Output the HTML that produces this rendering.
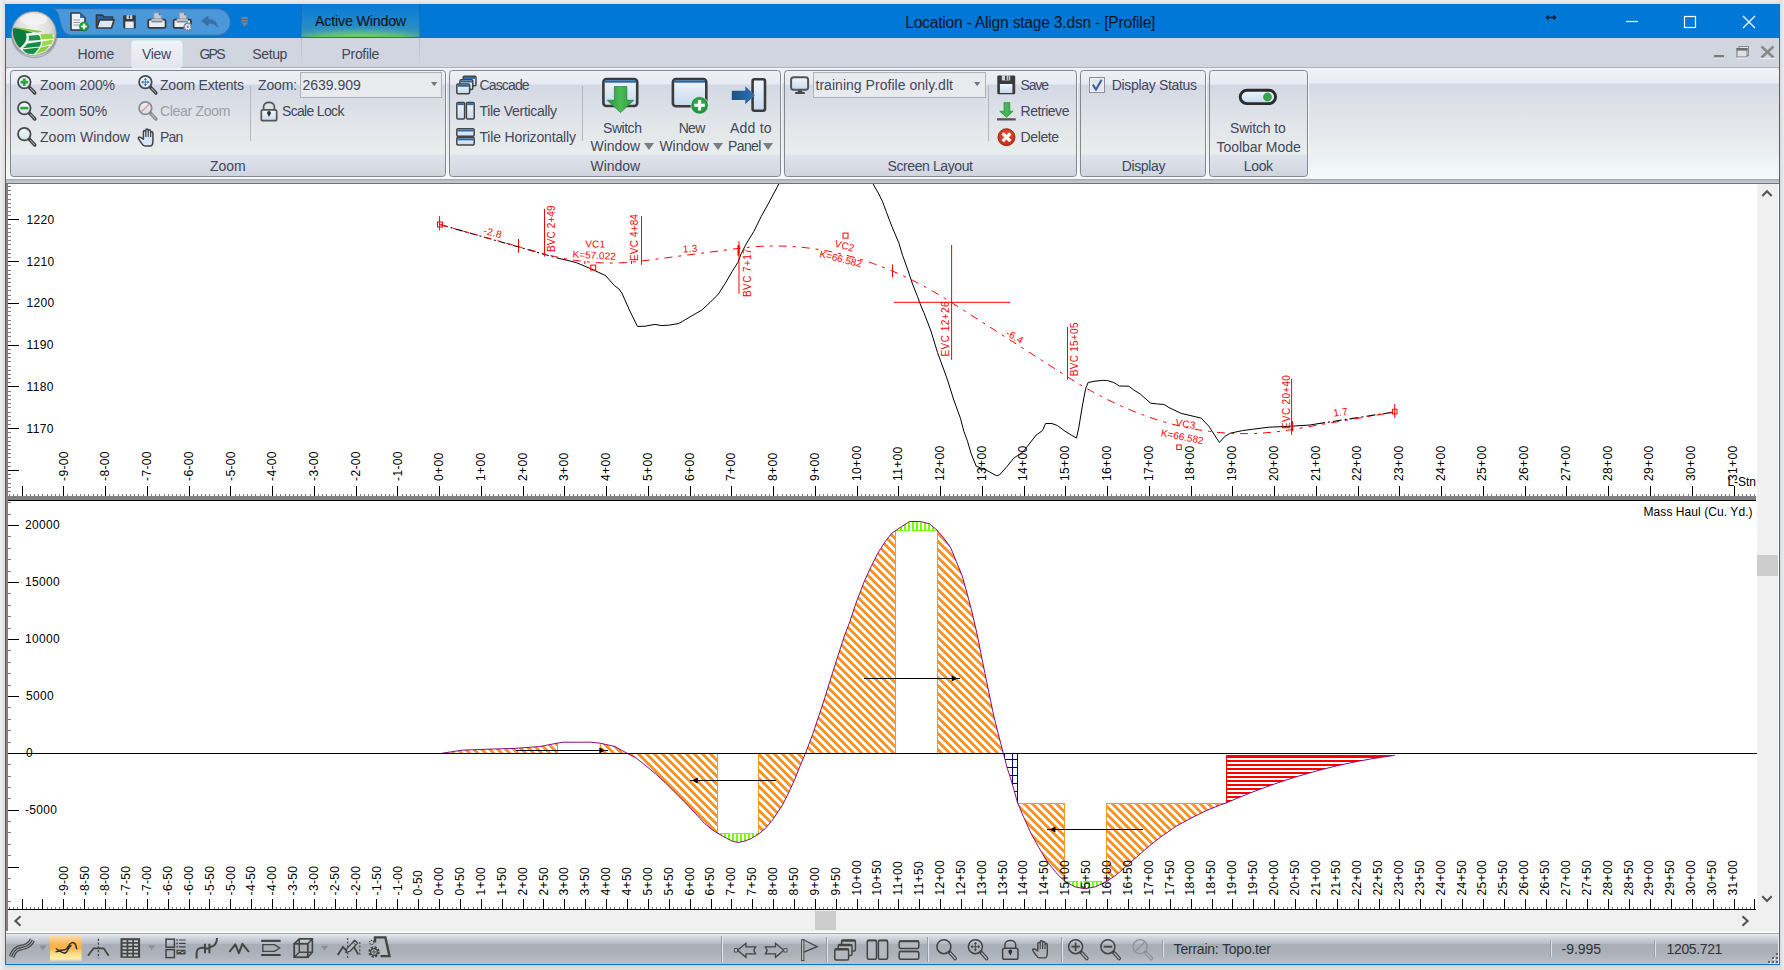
<!DOCTYPE html>
<html><head><meta charset="utf-8"><title>Location</title>
<style>
html,body{margin:0;padding:0}
body{width:1784px;height:970px;position:relative;overflow:hidden;background:#e6e5e5;font-family:"Liberation Sans",sans-serif}
.t{position:absolute;white-space:nowrap;line-height:20px;height:20px}
svg{position:absolute;overflow:visible}
svg text{font-family:"Liberation Sans",sans-serif}
</style></head><body>
<div style="position:absolute;left:0px;top:0px;width:1784px;height:4px;background:linear-gradient(#f0eeee,#dcdada)"></div>
<div style="position:absolute;left:0px;top:965px;width:1784px;height:5px;background:linear-gradient(#d6d2cf,#e4e3e2)"></div>
<div style="position:absolute;left:0px;top:0px;width:5px;height:970px;background:linear-gradient(90deg,#efefef,#dedede)"></div>
<div style="position:absolute;left:1780px;top:0px;width:4px;height:970px;background:linear-gradient(90deg,#dadada,#ececec)"></div>
<div style="position:absolute;left:5px;top:4px;width:1775px;height:961px;background:#0078d7"></div>
<div style="position:absolute;left:6px;top:38px;width:1773px;height:36px;background:#d1d5df"></div>
<div style="position:absolute;left:301px;top:4px;width:119px;height:33px;background:radial-gradient(ellipse 80% 34% at 50% 100%,rgba(118,208,124,1) 0%,rgba(100,196,130,0.75) 40%,rgba(70,170,160,0.25) 75%,rgba(60,160,180,0) 100%),linear-gradient(#0a7ad5 0%,#1482d2 30%,#2389c8 60%,#2f90bf 85%,#3a98b8 100%)"></div>
<div style="position:absolute;left:302px;top:36px;width:117px;height:1px;background:linear-gradient(90deg,#3f9fa0,#66c850 15%,#66c850 85%,#3f9fa0)"></div>
<div style="position:absolute;left:301px;top:4px;width:1px;height:33px;background:rgba(20,60,110,0.25)"></div>
<div style="position:absolute;left:419px;top:4px;width:1px;height:33px;background:rgba(20,60,110,0.25)"></div>
<div style="position:absolute;left:301px;top:38px;width:1px;height:29px;background:linear-gradient(#b8bcc9,#d1d5df)"></div>
<div style="position:absolute;left:419px;top:38px;width:1px;height:29px;background:linear-gradient(#b8bcc9,#d1d5df)"></div>
<div class="t " style="left:315.00px;top:11.20px;font-size:14.3px;letter-spacing:-0.213px;color:#0a0f18;">Active Window</div>
<div class="t " style="left:905.20px;top:12.64px;font-size:15.6px;letter-spacing:-0.207px;color:#0b1622;">Location - Align stage 3.dsn - [Profile]</div>
<svg style="left:1620px;top:10px" width="150" height="24" viewBox="1620 10 150 24"><g stroke="#fff" stroke-width="1.2" fill="none"><path d="M1626 21.5H1638"/><rect x="1684.5" y="16.5" width="11" height="11"/><path d="M1743 16L1755 28M1755 16L1743 28"/></g></svg>
<svg style="left:1545px;top:13px" width="12" height="10" viewBox="0 0 12 10"><path d="M0.5 4.5L3.5 1.5V3.7H8.5V1.5L11.5 4.5L8.5 7.5V5.3H3.5V7.5Z" fill="#1a1a1a"/></svg>
<svg style="left:1710px;top:44px" width="68" height="18" viewBox="1710 44 68 18"><rect x="1714" y="55" width="10" height="2.6" fill="#7b7b7b"/><rect x="1714" y="57.6" width="10" height="1" fill="#eee"/><rect x="1739" y="46.5" width="9.5" height="9" fill="#e3e6ee" stroke="#8a8a8a" stroke-width="1"/><rect x="1737" y="48.5" width="10" height="8.5" fill="#dde1ea" stroke="#777" stroke-width="1"/><rect x="1736.5" y="48" width="11" height="2.6" fill="#6e6e6e"/><rect x="1737" y="57.6" width="11" height="1" fill="#f4f4f4"/><path d="M1761.5 46.5L1773.5 57.5M1773.5 46.5L1761.5 57.5" stroke="#8a8a8a" stroke-width="2.6"/><rect x="1760" y="58" width="15" height="1" fill="#eee"/></svg>
<div class="t " style="left:77.50px;top:43.90px;font-size:14px;letter-spacing:-0.211px;color:#43475a;">Home</div>
<div style="position:absolute;left:131px;top:39.5px;width:51.5px;height:28.5px;background:linear-gradient(#f1f3f9,#e2e5ee);border:1px solid #c9eef4;border-bottom:none;border-radius:4px 4px 0 0;box-sizing:border-box"></div>
<div class="t " style="left:141.90px;top:43.90px;font-size:14px;letter-spacing:-0.273px;color:#43475a;">View</div>
<div class="t " style="left:199.40px;top:43.90px;font-size:14px;letter-spacing:-1.739px;color:#43475a;">GPS</div>
<div class="t " style="left:252.25px;top:43.90px;font-size:14px;letter-spacing:-0.367px;color:#43475a;">Setup</div>
<div class="t " style="left:341.50px;top:43.90px;font-size:14px;letter-spacing:-0.312px;color:#43475a;">Profile</div>
<div style="position:absolute;left:6px;top:67px;width:1773px;height:1px;background:#aeb2ba"></div>
<div style="position:absolute;left:6px;top:68px;width:1772.5px;height:110px;border-radius:4px 4px 0 0;background:linear-gradient(#f0f2f8 0px,#e9ecf4 15px,#d5d9e6 16px,#dadee7 30px,#e1e4e9 50px,#e7eaea 70px,#ecf2f1 90px,#f3fbfa 110px)"></div>
<div style="position:absolute;left:132px;top:67px;width:49px;height:1px;background:#e2e5ee"></div>
<div style="position:absolute;left:6px;top:178px;width:1773px;height:1px;background:#f4f9f9"></div>
<div style="position:absolute;left:6px;top:179px;width:1773px;height:5px;background:linear-gradient(#989ca4 0px,#b2b7c0 1px,#bdc2ca 2px,#c4c8cf 3.5px,#c4c8cf 4px,#727272 4px,#727272 5px)"></div>
<div style="position:absolute;left:10px;top:70px;width:436px;height:107px;box-sizing:border-box;border:1px solid #85888f;border-radius:3.5px;background:linear-gradient(#eef0f7 0px,#e8ebf3 13px,#d3d8e5 14px,#dbdfe7 35px,#e3e6ea 55px,#e8ebeb 75px,#eaeeed 83px,#e0e4ed 84px,#cfd3dc 107px);box-shadow:1px 1px 0 #f6f8fa"></div>
<div class="t " style="left:210.00px;top:156.20px;font-size:14px;letter-spacing:-0.008px;color:#43475a;">Zoom</div>
<div style="position:absolute;left:449px;top:70px;width:332px;height:107px;box-sizing:border-box;border:1px solid #85888f;border-radius:3.5px;background:linear-gradient(#eef0f7 0px,#e8ebf3 13px,#d3d8e5 14px,#dbdfe7 35px,#e3e6ea 55px,#e8ebeb 75px,#eaeeed 83px,#e0e4ed 84px,#cfd3dc 107px);box-shadow:1px 1px 0 #f6f8fa"></div>
<div class="t " style="left:590.50px;top:156.20px;font-size:14px;letter-spacing:-0.049px;color:#43475a;">Window</div>
<div style="position:absolute;left:784px;top:70px;width:293px;height:107px;box-sizing:border-box;border:1px solid #85888f;border-radius:3.5px;background:linear-gradient(#eef0f7 0px,#e8ebf3 13px,#d3d8e5 14px,#dbdfe7 35px,#e3e6ea 55px,#e8ebeb 75px,#eaeeed 83px,#e0e4ed 84px,#cfd3dc 107px);box-shadow:1px 1px 0 #f6f8fa"></div>
<div class="t " style="left:887.50px;top:156.20px;font-size:14px;letter-spacing:-0.406px;color:#43475a;">Screen Layout</div>
<div style="position:absolute;left:1080px;top:70px;width:126px;height:107px;box-sizing:border-box;border:1px solid #85888f;border-radius:3.5px;background:linear-gradient(#eef0f7 0px,#e8ebf3 13px,#d3d8e5 14px,#dbdfe7 35px,#e3e6ea 55px,#e8ebeb 75px,#eaeeed 83px,#e0e4ed 84px,#cfd3dc 107px);box-shadow:1px 1px 0 #f6f8fa"></div>
<div class="t " style="left:1121.75px;top:156.20px;font-size:14px;letter-spacing:-0.379px;color:#43475a;">Display</div>
<div style="position:absolute;left:1209px;top:70px;width:99px;height:107px;box-sizing:border-box;border:1px solid #85888f;border-radius:3.5px;background:linear-gradient(#eef0f7 0px,#e8ebf3 13px,#d3d8e5 14px,#dbdfe7 35px,#e3e6ea 55px,#e8ebeb 75px,#eaeeed 83px,#e0e4ed 84px,#cfd3dc 107px);box-shadow:1px 1px 0 #f6f8fa"></div>
<div class="t " style="left:1243.75px;top:156.20px;font-size:14px;letter-spacing:-0.339px;color:#43475a;">Look</div>
<div class="t " style="left:40.00px;top:74.70px;font-size:14px;letter-spacing:-0.053px;color:#43475a;">Zoom 200%</div>
<div class="t " style="left:40.00px;top:100.70px;font-size:14px;letter-spacing:-0.087px;color:#43475a;">Zoom 50%</div>
<div class="t " style="left:40.00px;top:126.70px;font-size:14px;letter-spacing:0.049px;color:#43475a;">Zoom Window</div>
<div class="t " style="left:160.00px;top:74.70px;font-size:14px;letter-spacing:-0.218px;color:#43475a;">Zoom Extents</div>
<div class="t " style="left:160.00px;top:100.70px;font-size:14px;letter-spacing:-0.313px;color:#9c9ea8;">Clear Zoom</div>
<div class="t " style="left:160.00px;top:126.70px;font-size:14px;letter-spacing:-0.803px;color:#43475a;">Pan</div>
<div style="position:absolute;left:250px;top:86px;width:1px;height:55px;background:#b4b8c0"></div>
<div class="t " style="left:258.00px;top:74.70px;font-size:14px;letter-spacing:-0.134px;color:#43475a;">Zoom:</div>
<div style="position:absolute;left:300px;top:72px;width:142px;height:26px;background:#e8eaee;border:1px solid #aeb2ba;box-sizing:border-box"></div>
<div class="t " style="left:302.50px;top:74.70px;font-size:14px;letter-spacing:-0.017px;color:#43475a;">2639.909</div>
<svg style="left:430.500px;top:82px" width="7" height="5"><path d="M0 0H6.400L3.200 4.200Z" fill="#74777f"/></svg>
<div class="t " style="left:282.00px;top:100.70px;font-size:14px;letter-spacing:-0.673px;color:#43475a;">Scale Lock</div>
<div class="t " style="left:479.50px;top:74.70px;font-size:14px;letter-spacing:-0.857px;color:#43475a;">Cascade</div>
<div class="t " style="left:479.50px;top:100.70px;font-size:14px;letter-spacing:-0.313px;color:#43475a;">Tile Vertically</div>
<div class="t " style="left:479.50px;top:126.70px;font-size:14px;letter-spacing:-0.165px;color:#43475a;">Tile Horizontally</div>
<div style="position:absolute;left:582px;top:86px;width:1px;height:55px;background:#b4b8c0"></div>
<div class="t " style="left:603.00px;top:117.70px;font-size:14px;letter-spacing:-0.456px;color:#43475a;">Switch</div>
<div class="t " style="left:590.50px;top:136.30px;font-size:14px;letter-spacing:-0.049px;color:#43475a;">Window</div>
<div class="t " style="left:678.75px;top:117.70px;font-size:14px;letter-spacing:-0.752px;color:#43475a;">New</div>
<div class="t " style="left:659.50px;top:136.30px;font-size:14px;letter-spacing:-0.090px;color:#43475a;">Window</div>
<div class="t " style="left:730.00px;top:117.70px;font-size:14px;letter-spacing:0.213px;color:#43475a;">Add to</div>
<div class="t " style="left:728.00px;top:136.30px;font-size:14px;letter-spacing:-0.611px;color:#43475a;">Panel</div>
<svg style="left:643.75px;top:143px" width="10" height="7"><path d="M0 0H10L5 7Z" fill="#7a7d86"/></svg>
<svg style="left:712.5px;top:143px" width="10" height="7"><path d="M0 0H10L5 7Z" fill="#7a7d86"/></svg>
<svg style="left:763px;top:143px" width="10" height="7"><path d="M0 0H10L5 7Z" fill="#7a7d86"/></svg>
<div style="position:absolute;left:813px;top:72px;width:173px;height:26px;background:#e8eaee;border:1px solid #aeb2ba;box-sizing:border-box"></div>
<div class="t " style="left:815.50px;top:74.70px;font-size:14px;letter-spacing:0.032px;color:#43475a;">training Profile only.dlt</div>
<svg style="left:974.300px;top:82px" width="7" height="5"><path d="M0 0H6.400L3.200 4.200Z" fill="#74777f"/></svg>
<div style="position:absolute;left:988px;top:86px;width:1px;height:55px;background:#b4b8c0"></div>
<div class="t " style="left:1020.50px;top:74.70px;font-size:14px;letter-spacing:-1.102px;color:#43475a;">Save</div>
<div class="t " style="left:1020.50px;top:100.70px;font-size:14px;letter-spacing:-0.454px;color:#43475a;">Retrieve</div>
<div class="t " style="left:1020.50px;top:126.70px;font-size:14px;letter-spacing:-0.369px;color:#43475a;">Delete</div>
<div class="t " style="left:1111.75px;top:74.70px;font-size:14px;letter-spacing:-0.320px;color:#43475a;">Display Status</div>
<div class="t " style="left:1230.00px;top:118.20px;font-size:14px;letter-spacing:-0.133px;color:#43475a;">Switch to</div>
<div class="t " style="left:1216.50px;top:136.70px;font-size:14px;letter-spacing:-0.060px;color:#43475a;">Toolbar Mode</div>
<div style="position:absolute;left:6px;top:184px;width:2px;height:747px;background:#808080"></div>
<div style="position:absolute;left:8px;top:184px;width:1749px;height:726px;background:#fff"></div>
<div style="position:absolute;left:1757px;top:184px;width:21px;height:726px;background:#f0f0f0"></div>
<div style="position:absolute;left:1778px;top:184px;width:1px;height:750px;background:#fff"></div>
<div style="position:absolute;left:1757px;top:555px;width:21px;height:21px;background:#cdcdcd"></div>
<svg style="left:1761px;top:189px" width="12" height="8"><path d="M1.300 7L6 2.200L10.700 7" stroke="#555" stroke-width="2.100" fill="none"/></svg>
<svg style="left:1761px;top:895px" width="12" height="8"><path d="M1.300 1.200L6 6L10.700 1.200" stroke="#555" stroke-width="2.100" fill="none"/></svg>
<div style="position:absolute;left:8px;top:910px;width:1770px;height:21px;background:#f0f0f0"></div>
<div style="position:absolute;left:815px;top:911px;width:21px;height:19px;background:#cdcdcd"></div>
<svg style="left:13px;top:915px" width="9" height="12"><path d="M7.500 1.300L2.400 6L7.500 10.700" stroke="#555" stroke-width="2.100" fill="none"/></svg>
<svg style="left:1741px;top:915px" width="9" height="12"><path d="M1.500 1.300L6.600 6L1.500 10.700" stroke="#555" stroke-width="2.100" fill="none"/></svg>
<div style="position:absolute;left:6px;top:931px;width:1773px;height:2px;background:linear-gradient(#f6f6f6,#ffffff)"></div>
<div style="position:absolute;left:6px;top:933px;width:1773px;height:1px;background:#a4a8b1"></div>
<div style="position:absolute;left:6px;top:934px;width:1773px;height:30px;background:linear-gradient(#e9ebf0 0px,#d6d9e0 3px,#b5bac6 10px,#a9aeb6 10.5px,#adb1b9 20px,#bcbfc7 30px)"></div>
<div class="t " style="left:1173.60px;top:939.30px;font-size:14px;letter-spacing:-0.217px;color:#2f333c;">Terrain: Topo.ter</div>
<div class="t " style="left:1561.60px;top:938.70px;font-size:14px;letter-spacing:-0.049px;color:#2f333c;">-9.995</div>
<div class="t " style="left:1666.60px;top:938.70px;font-size:14px;letter-spacing:-0.373px;color:#2f333c;">1205.721</div>
<div style="position:absolute;left:722px;top:936px;width:1px;height:26px;background:#dfe2e7"></div>
<div style="position:absolute;left:721px;top:936px;width:1px;height:26px;background:#989ca4"></div>
<div style="position:absolute;left:827px;top:937px;width:1px;height:25px;background:#dfe2e7"></div>
<div style="position:absolute;left:826px;top:937px;width:1px;height:25px;background:#989ca4"></div>
<div style="position:absolute;left:927.5px;top:937px;width:1px;height:25px;background:#dfe2e7"></div>
<div style="position:absolute;left:926.5px;top:937px;width:1px;height:25px;background:#989ca4"></div>
<div style="position:absolute;left:1061.5px;top:937px;width:1px;height:25px;background:#dfe2e7"></div>
<div style="position:absolute;left:1060.5px;top:937px;width:1px;height:25px;background:#989ca4"></div>
<div style="position:absolute;left:1163px;top:940px;width:1px;height:17px;background:#dfe2e7"></div>
<div style="position:absolute;left:1162px;top:940px;width:1px;height:17px;background:#989ca4"></div>
<div style="position:absolute;left:1551px;top:940px;width:1px;height:17px;background:#dfe2e7"></div>
<div style="position:absolute;left:1550px;top:940px;width:1px;height:17px;background:#989ca4"></div>
<div style="position:absolute;left:1655px;top:940px;width:1px;height:17px;background:#dfe2e7"></div>
<div style="position:absolute;left:1654px;top:940px;width:1px;height:17px;background:#989ca4"></div>
<div style="position:absolute;left:1778px;top:934px;width:1px;height:30px;background:#efe9e9"></div>
<svg style="left:0;top:0" width="1784" height="970" viewBox="0 0 1784 970">
<defs>
<clipPath id="cu"><rect x="8" y="184" width="1749" height="312"/></clipPath>
<clipPath id="cl"><rect x="8" y="501" width="1749" height="409"/></clipPath>
<pattern id="ho" width="8" height="8" patternUnits="userSpaceOnUse"><rect width="8" height="8" fill="#fff"/><g fill="#ff9428" shape-rendering="crispEdges"><rect x="3" y="0" width="4" height="1"/><rect x="4" y="1" width="4" height="1"/><rect x="5" y="2" width="3" height="1"/><rect x="0" y="2" width="1" height="1"/><rect x="6" y="3" width="2" height="1"/><rect x="0" y="3" width="2" height="1"/><rect x="7" y="4" width="1" height="1"/><rect x="0" y="4" width="3" height="1"/><rect x="0" y="5" width="4" height="1"/><rect x="1" y="6" width="4" height="1"/><rect x="2" y="7" width="4" height="1"/></g></pattern>
<pattern id="hg" width="4" height="4" patternUnits="userSpaceOnUse"><rect width="4" height="4" fill="#fff"/><rect width="2" height="4" fill="#78ff00" shape-rendering="crispEdges"/></pattern>
<pattern id="hr" width="4" height="4" patternUnits="userSpaceOnUse"><rect width="4" height="4" fill="#fff"/><rect width="4" height="2" fill="#ff0000" shape-rendering="crispEdges"/></pattern>
<pattern id="hb" width="8" height="8" patternUnits="userSpaceOnUse"><rect width="8" height="8" fill="#fff"/><g fill="#00008b" shape-rendering="crispEdges"><rect x="4" y="0" width="1" height="8"/><rect x="0" y="7" width="8" height="1"/></g></pattern>
</defs>
<g shape-rendering="crispEdges" fill="#000">
<rect x="8" y="186" width="3" height="1" fill="#7c7c7c"/>
<rect x="8" y="190" width="3" height="1" fill="#7c7c7c"/>
<rect x="8" y="194" width="3" height="1" fill="#7c7c7c"/>
<rect x="8" y="199" width="3" height="1" fill="#7c7c7c"/>
<rect x="8" y="203" width="3" height="1" fill="#7c7c7c"/>
<rect x="8" y="207" width="3" height="1" fill="#7c7c7c"/>
<rect x="8" y="211" width="3" height="1" fill="#7c7c7c"/>
<rect x="8" y="215" width="3" height="1" fill="#7c7c7c"/>
<rect x="8" y="219" width="11" height="1"/>
<rect x="8" y="224" width="3" height="1" fill="#7c7c7c"/>
<rect x="8" y="228" width="3" height="1" fill="#7c7c7c"/>
<rect x="8" y="232" width="3" height="1" fill="#7c7c7c"/>
<rect x="8" y="236" width="3" height="1" fill="#7c7c7c"/>
<rect x="8" y="240" width="3" height="1" fill="#7c7c7c"/>
<rect x="8" y="244" width="3" height="1" fill="#7c7c7c"/>
<rect x="8" y="249" width="3" height="1" fill="#7c7c7c"/>
<rect x="8" y="253" width="3" height="1" fill="#7c7c7c"/>
<rect x="8" y="257" width="3" height="1" fill="#7c7c7c"/>
<rect x="8" y="261" width="11" height="1"/>
<rect x="8" y="265" width="3" height="1" fill="#7c7c7c"/>
<rect x="8" y="270" width="3" height="1" fill="#7c7c7c"/>
<rect x="8" y="274" width="3" height="1" fill="#7c7c7c"/>
<rect x="8" y="278" width="3" height="1" fill="#7c7c7c"/>
<rect x="8" y="282" width="3" height="1" fill="#7c7c7c"/>
<rect x="8" y="286" width="3" height="1" fill="#7c7c7c"/>
<rect x="8" y="290" width="3" height="1" fill="#7c7c7c"/>
<rect x="8" y="295" width="3" height="1" fill="#7c7c7c"/>
<rect x="8" y="299" width="3" height="1" fill="#7c7c7c"/>
<rect x="8" y="303" width="11" height="1"/>
<rect x="8" y="307" width="3" height="1" fill="#7c7c7c"/>
<rect x="8" y="311" width="3" height="1" fill="#7c7c7c"/>
<rect x="8" y="315" width="3" height="1" fill="#7c7c7c"/>
<rect x="8" y="320" width="3" height="1" fill="#7c7c7c"/>
<rect x="8" y="324" width="3" height="1" fill="#7c7c7c"/>
<rect x="8" y="328" width="3" height="1" fill="#7c7c7c"/>
<rect x="8" y="332" width="3" height="1" fill="#7c7c7c"/>
<rect x="8" y="336" width="3" height="1" fill="#7c7c7c"/>
<rect x="8" y="341" width="3" height="1" fill="#7c7c7c"/>
<rect x="8" y="345" width="11" height="1"/>
<rect x="8" y="349" width="3" height="1" fill="#7c7c7c"/>
<rect x="8" y="353" width="3" height="1" fill="#7c7c7c"/>
<rect x="8" y="357" width="3" height="1" fill="#7c7c7c"/>
<rect x="8" y="361" width="3" height="1" fill="#7c7c7c"/>
<rect x="8" y="366" width="3" height="1" fill="#7c7c7c"/>
<rect x="8" y="370" width="3" height="1" fill="#7c7c7c"/>
<rect x="8" y="374" width="3" height="1" fill="#7c7c7c"/>
<rect x="8" y="378" width="3" height="1" fill="#7c7c7c"/>
<rect x="8" y="382" width="3" height="1" fill="#7c7c7c"/>
<rect x="8" y="386" width="11" height="1"/>
<rect x="8" y="391" width="3" height="1" fill="#7c7c7c"/>
<rect x="8" y="395" width="3" height="1" fill="#7c7c7c"/>
<rect x="8" y="399" width="3" height="1" fill="#7c7c7c"/>
<rect x="8" y="403" width="3" height="1" fill="#7c7c7c"/>
<rect x="8" y="407" width="3" height="1" fill="#7c7c7c"/>
<rect x="8" y="412" width="3" height="1" fill="#7c7c7c"/>
<rect x="8" y="416" width="3" height="1" fill="#7c7c7c"/>
<rect x="8" y="420" width="3" height="1" fill="#7c7c7c"/>
<rect x="8" y="424" width="3" height="1" fill="#7c7c7c"/>
<rect x="8" y="428" width="11" height="1"/>
<rect x="8" y="432" width="3" height="1" fill="#7c7c7c"/>
<rect x="8" y="437" width="3" height="1" fill="#7c7c7c"/>
<rect x="8" y="441" width="3" height="1" fill="#7c7c7c"/>
<rect x="8" y="445" width="3" height="1" fill="#7c7c7c"/>
<rect x="8" y="449" width="3" height="1" fill="#7c7c7c"/>
<rect x="8" y="453" width="3" height="1" fill="#7c7c7c"/>
<rect x="8" y="457" width="3" height="1" fill="#7c7c7c"/>
<rect x="8" y="462" width="3" height="1" fill="#7c7c7c"/>
<rect x="8" y="466" width="3" height="1" fill="#7c7c7c"/>
<rect x="8" y="470" width="11" height="1"/>
<rect x="8" y="474" width="3" height="1" fill="#7c7c7c"/>
<rect x="8" y="478" width="3" height="1" fill="#7c7c7c"/>
<rect x="8" y="483" width="3" height="1" fill="#7c7c7c"/>
<rect x="8" y="487" width="3" height="1" fill="#7c7c7c"/>
<rect x="8" y="491" width="3" height="1" fill="#7c7c7c"/>
<rect x="8" y="901" width="3" height="1" fill="#7c7c7c"/>
<rect x="8" y="889" width="3" height="1" fill="#7c7c7c"/>
<rect x="8" y="878" width="3" height="1" fill="#7c7c7c"/>
<rect x="8" y="867" width="11" height="1"/>
<rect x="8" y="855" width="3" height="1" fill="#7c7c7c"/>
<rect x="8" y="844" width="3" height="1" fill="#7c7c7c"/>
<rect x="8" y="832" width="3" height="1" fill="#7c7c7c"/>
<rect x="8" y="821" width="3" height="1" fill="#7c7c7c"/>
<rect x="8" y="810" width="11" height="1"/>
<rect x="8" y="798" width="3" height="1" fill="#7c7c7c"/>
<rect x="8" y="787" width="3" height="1" fill="#7c7c7c"/>
<rect x="8" y="776" width="3" height="1" fill="#7c7c7c"/>
<rect x="8" y="764" width="3" height="1" fill="#7c7c7c"/>
<rect x="8" y="753" width="11" height="1"/>
<rect x="8" y="742" width="3" height="1" fill="#7c7c7c"/>
<rect x="8" y="730" width="3" height="1" fill="#7c7c7c"/>
<rect x="8" y="719" width="3" height="1" fill="#7c7c7c"/>
<rect x="8" y="707" width="3" height="1" fill="#7c7c7c"/>
<rect x="8" y="696" width="11" height="1"/>
<rect x="8" y="685" width="3" height="1" fill="#7c7c7c"/>
<rect x="8" y="673" width="3" height="1" fill="#7c7c7c"/>
<rect x="8" y="662" width="3" height="1" fill="#7c7c7c"/>
<rect x="8" y="650" width="3" height="1" fill="#7c7c7c"/>
<rect x="8" y="639" width="11" height="1"/>
<rect x="8" y="628" width="3" height="1" fill="#7c7c7c"/>
<rect x="8" y="616" width="3" height="1" fill="#7c7c7c"/>
<rect x="8" y="605" width="3" height="1" fill="#7c7c7c"/>
<rect x="8" y="593" width="3" height="1" fill="#7c7c7c"/>
<rect x="8" y="582" width="11" height="1"/>
<rect x="8" y="571" width="3" height="1" fill="#7c7c7c"/>
<rect x="8" y="559" width="3" height="1" fill="#7c7c7c"/>
<rect x="8" y="548" width="3" height="1" fill="#7c7c7c"/>
<rect x="8" y="536" width="3" height="1" fill="#7c7c7c"/>
<rect x="8" y="525" width="11" height="1"/>
<rect x="8" y="514" width="3" height="1" fill="#7c7c7c"/>
<rect x="8" y="502" width="3" height="1" fill="#7c7c7c"/>
<rect x="9" y="494" width="1" height="2" fill="#808080"/>
<rect x="9" y="907" width="1" height="2" fill="#808080"/>
<rect x="13" y="494" width="1" height="2" fill="#808080"/>
<rect x="13" y="907" width="1" height="2" fill="#808080"/>
<rect x="17" y="494" width="1" height="2" fill="#808080"/>
<rect x="17" y="907" width="1" height="2" fill="#808080"/>
<rect x="22" y="486" width="1" height="10"/>
<rect x="22" y="899" width="1" height="10"/>
<rect x="26" y="494" width="1" height="2" fill="#808080"/>
<rect x="26" y="907" width="1" height="2" fill="#808080"/>
<rect x="30" y="494" width="1" height="2" fill="#808080"/>
<rect x="30" y="907" width="1" height="2" fill="#808080"/>
<rect x="34" y="494" width="1" height="2" fill="#808080"/>
<rect x="34" y="907" width="1" height="2" fill="#808080"/>
<rect x="38" y="494" width="1" height="2" fill="#808080"/>
<rect x="38" y="907" width="1" height="2" fill="#808080"/>
<rect x="42" y="494" width="1" height="2" fill="#808080"/>
<rect x="42" y="899" width="1" height="10"/>
<rect x="47" y="494" width="1" height="2" fill="#808080"/>
<rect x="47" y="907" width="1" height="2" fill="#808080"/>
<rect x="51" y="494" width="1" height="2" fill="#808080"/>
<rect x="51" y="907" width="1" height="2" fill="#808080"/>
<rect x="55" y="494" width="1" height="2" fill="#808080"/>
<rect x="55" y="907" width="1" height="2" fill="#808080"/>
<rect x="59" y="494" width="1" height="2" fill="#808080"/>
<rect x="59" y="907" width="1" height="2" fill="#808080"/>
<rect x="63" y="486" width="1" height="10"/>
<rect x="63" y="899" width="1" height="10"/>
<rect x="67" y="494" width="1" height="2" fill="#808080"/>
<rect x="67" y="907" width="1" height="2" fill="#808080"/>
<rect x="72" y="494" width="1" height="2" fill="#808080"/>
<rect x="72" y="907" width="1" height="2" fill="#808080"/>
<rect x="76" y="494" width="1" height="2" fill="#808080"/>
<rect x="76" y="907" width="1" height="2" fill="#808080"/>
<rect x="80" y="494" width="1" height="2" fill="#808080"/>
<rect x="80" y="907" width="1" height="2" fill="#808080"/>
<rect x="84" y="494" width="1" height="2" fill="#808080"/>
<rect x="84" y="899" width="1" height="10"/>
<rect x="88" y="494" width="1" height="2" fill="#808080"/>
<rect x="88" y="907" width="1" height="2" fill="#808080"/>
<rect x="93" y="494" width="1" height="2" fill="#808080"/>
<rect x="93" y="907" width="1" height="2" fill="#808080"/>
<rect x="97" y="494" width="1" height="2" fill="#808080"/>
<rect x="97" y="907" width="1" height="2" fill="#808080"/>
<rect x="101" y="494" width="1" height="2" fill="#808080"/>
<rect x="101" y="907" width="1" height="2" fill="#808080"/>
<rect x="105" y="486" width="1" height="10"/>
<rect x="105" y="899" width="1" height="10"/>
<rect x="109" y="494" width="1" height="2" fill="#808080"/>
<rect x="109" y="907" width="1" height="2" fill="#808080"/>
<rect x="113" y="494" width="1" height="2" fill="#808080"/>
<rect x="113" y="907" width="1" height="2" fill="#808080"/>
<rect x="118" y="494" width="1" height="2" fill="#808080"/>
<rect x="118" y="907" width="1" height="2" fill="#808080"/>
<rect x="122" y="494" width="1" height="2" fill="#808080"/>
<rect x="122" y="907" width="1" height="2" fill="#808080"/>
<rect x="126" y="494" width="1" height="2" fill="#808080"/>
<rect x="126" y="899" width="1" height="10"/>
<rect x="130" y="494" width="1" height="2" fill="#808080"/>
<rect x="130" y="907" width="1" height="2" fill="#808080"/>
<rect x="134" y="494" width="1" height="2" fill="#808080"/>
<rect x="134" y="907" width="1" height="2" fill="#808080"/>
<rect x="138" y="494" width="1" height="2" fill="#808080"/>
<rect x="138" y="907" width="1" height="2" fill="#808080"/>
<rect x="143" y="494" width="1" height="2" fill="#808080"/>
<rect x="143" y="907" width="1" height="2" fill="#808080"/>
<rect x="147" y="486" width="1" height="10"/>
<rect x="147" y="899" width="1" height="10"/>
<rect x="151" y="494" width="1" height="2" fill="#808080"/>
<rect x="151" y="907" width="1" height="2" fill="#808080"/>
<rect x="155" y="494" width="1" height="2" fill="#808080"/>
<rect x="155" y="907" width="1" height="2" fill="#808080"/>
<rect x="159" y="494" width="1" height="2" fill="#808080"/>
<rect x="159" y="907" width="1" height="2" fill="#808080"/>
<rect x="164" y="494" width="1" height="2" fill="#808080"/>
<rect x="164" y="907" width="1" height="2" fill="#808080"/>
<rect x="168" y="494" width="1" height="2" fill="#808080"/>
<rect x="168" y="899" width="1" height="10"/>
<rect x="172" y="494" width="1" height="2" fill="#808080"/>
<rect x="172" y="907" width="1" height="2" fill="#808080"/>
<rect x="176" y="494" width="1" height="2" fill="#808080"/>
<rect x="176" y="907" width="1" height="2" fill="#808080"/>
<rect x="180" y="494" width="1" height="2" fill="#808080"/>
<rect x="180" y="907" width="1" height="2" fill="#808080"/>
<rect x="184" y="494" width="1" height="2" fill="#808080"/>
<rect x="184" y="907" width="1" height="2" fill="#808080"/>
<rect x="189" y="486" width="1" height="10"/>
<rect x="189" y="899" width="1" height="10"/>
<rect x="193" y="494" width="1" height="2" fill="#808080"/>
<rect x="193" y="907" width="1" height="2" fill="#808080"/>
<rect x="197" y="494" width="1" height="2" fill="#808080"/>
<rect x="197" y="907" width="1" height="2" fill="#808080"/>
<rect x="201" y="494" width="1" height="2" fill="#808080"/>
<rect x="201" y="907" width="1" height="2" fill="#808080"/>
<rect x="205" y="494" width="1" height="2" fill="#808080"/>
<rect x="205" y="907" width="1" height="2" fill="#808080"/>
<rect x="209" y="494" width="1" height="2" fill="#808080"/>
<rect x="209" y="899" width="1" height="10"/>
<rect x="214" y="494" width="1" height="2" fill="#808080"/>
<rect x="214" y="907" width="1" height="2" fill="#808080"/>
<rect x="218" y="494" width="1" height="2" fill="#808080"/>
<rect x="218" y="907" width="1" height="2" fill="#808080"/>
<rect x="222" y="494" width="1" height="2" fill="#808080"/>
<rect x="222" y="907" width="1" height="2" fill="#808080"/>
<rect x="226" y="494" width="1" height="2" fill="#808080"/>
<rect x="226" y="907" width="1" height="2" fill="#808080"/>
<rect x="230" y="486" width="1" height="10"/>
<rect x="230" y="899" width="1" height="10"/>
<rect x="235" y="494" width="1" height="2" fill="#808080"/>
<rect x="235" y="907" width="1" height="2" fill="#808080"/>
<rect x="239" y="494" width="1" height="2" fill="#808080"/>
<rect x="239" y="907" width="1" height="2" fill="#808080"/>
<rect x="243" y="494" width="1" height="2" fill="#808080"/>
<rect x="243" y="907" width="1" height="2" fill="#808080"/>
<rect x="247" y="494" width="1" height="2" fill="#808080"/>
<rect x="247" y="907" width="1" height="2" fill="#808080"/>
<rect x="251" y="494" width="1" height="2" fill="#808080"/>
<rect x="251" y="899" width="1" height="10"/>
<rect x="255" y="494" width="1" height="2" fill="#808080"/>
<rect x="255" y="907" width="1" height="2" fill="#808080"/>
<rect x="260" y="494" width="1" height="2" fill="#808080"/>
<rect x="260" y="907" width="1" height="2" fill="#808080"/>
<rect x="264" y="494" width="1" height="2" fill="#808080"/>
<rect x="264" y="907" width="1" height="2" fill="#808080"/>
<rect x="268" y="494" width="1" height="2" fill="#808080"/>
<rect x="268" y="907" width="1" height="2" fill="#808080"/>
<rect x="272" y="486" width="1" height="10"/>
<rect x="272" y="899" width="1" height="10"/>
<rect x="276" y="494" width="1" height="2" fill="#808080"/>
<rect x="276" y="907" width="1" height="2" fill="#808080"/>
<rect x="280" y="494" width="1" height="2" fill="#808080"/>
<rect x="280" y="907" width="1" height="2" fill="#808080"/>
<rect x="285" y="494" width="1" height="2" fill="#808080"/>
<rect x="285" y="907" width="1" height="2" fill="#808080"/>
<rect x="289" y="494" width="1" height="2" fill="#808080"/>
<rect x="289" y="907" width="1" height="2" fill="#808080"/>
<rect x="293" y="494" width="1" height="2" fill="#808080"/>
<rect x="293" y="899" width="1" height="10"/>
<rect x="297" y="494" width="1" height="2" fill="#808080"/>
<rect x="297" y="907" width="1" height="2" fill="#808080"/>
<rect x="301" y="494" width="1" height="2" fill="#808080"/>
<rect x="301" y="907" width="1" height="2" fill="#808080"/>
<rect x="305" y="494" width="1" height="2" fill="#808080"/>
<rect x="305" y="907" width="1" height="2" fill="#808080"/>
<rect x="310" y="494" width="1" height="2" fill="#808080"/>
<rect x="310" y="907" width="1" height="2" fill="#808080"/>
<rect x="314" y="486" width="1" height="10"/>
<rect x="314" y="899" width="1" height="10"/>
<rect x="318" y="494" width="1" height="2" fill="#808080"/>
<rect x="318" y="907" width="1" height="2" fill="#808080"/>
<rect x="322" y="494" width="1" height="2" fill="#808080"/>
<rect x="322" y="907" width="1" height="2" fill="#808080"/>
<rect x="326" y="494" width="1" height="2" fill="#808080"/>
<rect x="326" y="907" width="1" height="2" fill="#808080"/>
<rect x="331" y="494" width="1" height="2" fill="#808080"/>
<rect x="331" y="907" width="1" height="2" fill="#808080"/>
<rect x="335" y="494" width="1" height="2" fill="#808080"/>
<rect x="335" y="899" width="1" height="10"/>
<rect x="339" y="494" width="1" height="2" fill="#808080"/>
<rect x="339" y="907" width="1" height="2" fill="#808080"/>
<rect x="343" y="494" width="1" height="2" fill="#808080"/>
<rect x="343" y="907" width="1" height="2" fill="#808080"/>
<rect x="347" y="494" width="1" height="2" fill="#808080"/>
<rect x="347" y="907" width="1" height="2" fill="#808080"/>
<rect x="351" y="494" width="1" height="2" fill="#808080"/>
<rect x="351" y="907" width="1" height="2" fill="#808080"/>
<rect x="356" y="486" width="1" height="10"/>
<rect x="356" y="899" width="1" height="10"/>
<rect x="360" y="494" width="1" height="2" fill="#808080"/>
<rect x="360" y="907" width="1" height="2" fill="#808080"/>
<rect x="364" y="494" width="1" height="2" fill="#808080"/>
<rect x="364" y="907" width="1" height="2" fill="#808080"/>
<rect x="368" y="494" width="1" height="2" fill="#808080"/>
<rect x="368" y="907" width="1" height="2" fill="#808080"/>
<rect x="372" y="494" width="1" height="2" fill="#808080"/>
<rect x="372" y="907" width="1" height="2" fill="#808080"/>
<rect x="376" y="494" width="1" height="2" fill="#808080"/>
<rect x="376" y="899" width="1" height="10"/>
<rect x="381" y="494" width="1" height="2" fill="#808080"/>
<rect x="381" y="907" width="1" height="2" fill="#808080"/>
<rect x="385" y="494" width="1" height="2" fill="#808080"/>
<rect x="385" y="907" width="1" height="2" fill="#808080"/>
<rect x="389" y="494" width="1" height="2" fill="#808080"/>
<rect x="389" y="907" width="1" height="2" fill="#808080"/>
<rect x="393" y="494" width="1" height="2" fill="#808080"/>
<rect x="393" y="907" width="1" height="2" fill="#808080"/>
<rect x="397" y="486" width="1" height="10"/>
<rect x="397" y="899" width="1" height="10"/>
<rect x="402" y="494" width="1" height="2" fill="#808080"/>
<rect x="402" y="907" width="1" height="2" fill="#808080"/>
<rect x="406" y="494" width="1" height="2" fill="#808080"/>
<rect x="406" y="907" width="1" height="2" fill="#808080"/>
<rect x="410" y="494" width="1" height="2" fill="#808080"/>
<rect x="410" y="907" width="1" height="2" fill="#808080"/>
<rect x="414" y="494" width="1" height="2" fill="#808080"/>
<rect x="414" y="907" width="1" height="2" fill="#808080"/>
<rect x="418" y="494" width="1" height="2" fill="#808080"/>
<rect x="418" y="899" width="1" height="10"/>
<rect x="422" y="494" width="1" height="2" fill="#808080"/>
<rect x="422" y="907" width="1" height="2" fill="#808080"/>
<rect x="427" y="494" width="1" height="2" fill="#808080"/>
<rect x="427" y="907" width="1" height="2" fill="#808080"/>
<rect x="431" y="494" width="1" height="2" fill="#808080"/>
<rect x="431" y="907" width="1" height="2" fill="#808080"/>
<rect x="435" y="494" width="1" height="2" fill="#808080"/>
<rect x="435" y="907" width="1" height="2" fill="#808080"/>
<rect x="439" y="486" width="1" height="10"/>
<rect x="439" y="899" width="1" height="10"/>
<rect x="443" y="494" width="1" height="2" fill="#808080"/>
<rect x="443" y="907" width="1" height="2" fill="#808080"/>
<rect x="447" y="494" width="1" height="2" fill="#808080"/>
<rect x="447" y="907" width="1" height="2" fill="#808080"/>
<rect x="452" y="494" width="1" height="2" fill="#808080"/>
<rect x="452" y="907" width="1" height="2" fill="#808080"/>
<rect x="456" y="494" width="1" height="2" fill="#808080"/>
<rect x="456" y="907" width="1" height="2" fill="#808080"/>
<rect x="460" y="494" width="1" height="2" fill="#808080"/>
<rect x="460" y="899" width="1" height="10"/>
<rect x="464" y="494" width="1" height="2" fill="#808080"/>
<rect x="464" y="907" width="1" height="2" fill="#808080"/>
<rect x="468" y="494" width="1" height="2" fill="#808080"/>
<rect x="468" y="907" width="1" height="2" fill="#808080"/>
<rect x="473" y="494" width="1" height="2" fill="#808080"/>
<rect x="473" y="907" width="1" height="2" fill="#808080"/>
<rect x="477" y="494" width="1" height="2" fill="#808080"/>
<rect x="477" y="907" width="1" height="2" fill="#808080"/>
<rect x="481" y="486" width="1" height="10"/>
<rect x="481" y="899" width="1" height="10"/>
<rect x="485" y="494" width="1" height="2" fill="#808080"/>
<rect x="485" y="907" width="1" height="2" fill="#808080"/>
<rect x="489" y="494" width="1" height="2" fill="#808080"/>
<rect x="489" y="907" width="1" height="2" fill="#808080"/>
<rect x="493" y="494" width="1" height="2" fill="#808080"/>
<rect x="493" y="907" width="1" height="2" fill="#808080"/>
<rect x="498" y="494" width="1" height="2" fill="#808080"/>
<rect x="498" y="907" width="1" height="2" fill="#808080"/>
<rect x="502" y="494" width="1" height="2" fill="#808080"/>
<rect x="502" y="899" width="1" height="10"/>
<rect x="506" y="494" width="1" height="2" fill="#808080"/>
<rect x="506" y="907" width="1" height="2" fill="#808080"/>
<rect x="510" y="494" width="1" height="2" fill="#808080"/>
<rect x="510" y="907" width="1" height="2" fill="#808080"/>
<rect x="514" y="494" width="1" height="2" fill="#808080"/>
<rect x="514" y="907" width="1" height="2" fill="#808080"/>
<rect x="518" y="494" width="1" height="2" fill="#808080"/>
<rect x="518" y="907" width="1" height="2" fill="#808080"/>
<rect x="523" y="486" width="1" height="10"/>
<rect x="523" y="899" width="1" height="10"/>
<rect x="527" y="494" width="1" height="2" fill="#808080"/>
<rect x="527" y="907" width="1" height="2" fill="#808080"/>
<rect x="531" y="494" width="1" height="2" fill="#808080"/>
<rect x="531" y="907" width="1" height="2" fill="#808080"/>
<rect x="535" y="494" width="1" height="2" fill="#808080"/>
<rect x="535" y="907" width="1" height="2" fill="#808080"/>
<rect x="539" y="494" width="1" height="2" fill="#808080"/>
<rect x="539" y="907" width="1" height="2" fill="#808080"/>
<rect x="543" y="494" width="1" height="2" fill="#808080"/>
<rect x="543" y="899" width="1" height="10"/>
<rect x="548" y="494" width="1" height="2" fill="#808080"/>
<rect x="548" y="907" width="1" height="2" fill="#808080"/>
<rect x="552" y="494" width="1" height="2" fill="#808080"/>
<rect x="552" y="907" width="1" height="2" fill="#808080"/>
<rect x="556" y="494" width="1" height="2" fill="#808080"/>
<rect x="556" y="907" width="1" height="2" fill="#808080"/>
<rect x="560" y="494" width="1" height="2" fill="#808080"/>
<rect x="560" y="907" width="1" height="2" fill="#808080"/>
<rect x="564" y="486" width="1" height="10"/>
<rect x="564" y="899" width="1" height="10"/>
<rect x="569" y="494" width="1" height="2" fill="#808080"/>
<rect x="569" y="907" width="1" height="2" fill="#808080"/>
<rect x="573" y="494" width="1" height="2" fill="#808080"/>
<rect x="573" y="907" width="1" height="2" fill="#808080"/>
<rect x="577" y="494" width="1" height="2" fill="#808080"/>
<rect x="577" y="907" width="1" height="2" fill="#808080"/>
<rect x="581" y="494" width="1" height="2" fill="#808080"/>
<rect x="581" y="907" width="1" height="2" fill="#808080"/>
<rect x="585" y="494" width="1" height="2" fill="#808080"/>
<rect x="585" y="899" width="1" height="10"/>
<rect x="589" y="494" width="1" height="2" fill="#808080"/>
<rect x="589" y="907" width="1" height="2" fill="#808080"/>
<rect x="594" y="494" width="1" height="2" fill="#808080"/>
<rect x="594" y="907" width="1" height="2" fill="#808080"/>
<rect x="598" y="494" width="1" height="2" fill="#808080"/>
<rect x="598" y="907" width="1" height="2" fill="#808080"/>
<rect x="602" y="494" width="1" height="2" fill="#808080"/>
<rect x="602" y="907" width="1" height="2" fill="#808080"/>
<rect x="606" y="486" width="1" height="10"/>
<rect x="606" y="899" width="1" height="10"/>
<rect x="610" y="494" width="1" height="2" fill="#808080"/>
<rect x="610" y="907" width="1" height="2" fill="#808080"/>
<rect x="614" y="494" width="1" height="2" fill="#808080"/>
<rect x="614" y="907" width="1" height="2" fill="#808080"/>
<rect x="619" y="494" width="1" height="2" fill="#808080"/>
<rect x="619" y="907" width="1" height="2" fill="#808080"/>
<rect x="623" y="494" width="1" height="2" fill="#808080"/>
<rect x="623" y="907" width="1" height="2" fill="#808080"/>
<rect x="627" y="494" width="1" height="2" fill="#808080"/>
<rect x="627" y="899" width="1" height="10"/>
<rect x="631" y="494" width="1" height="2" fill="#808080"/>
<rect x="631" y="907" width="1" height="2" fill="#808080"/>
<rect x="635" y="494" width="1" height="2" fill="#808080"/>
<rect x="635" y="907" width="1" height="2" fill="#808080"/>
<rect x="640" y="494" width="1" height="2" fill="#808080"/>
<rect x="640" y="907" width="1" height="2" fill="#808080"/>
<rect x="644" y="494" width="1" height="2" fill="#808080"/>
<rect x="644" y="907" width="1" height="2" fill="#808080"/>
<rect x="648" y="486" width="1" height="10"/>
<rect x="648" y="899" width="1" height="10"/>
<rect x="652" y="494" width="1" height="2" fill="#808080"/>
<rect x="652" y="907" width="1" height="2" fill="#808080"/>
<rect x="656" y="494" width="1" height="2" fill="#808080"/>
<rect x="656" y="907" width="1" height="2" fill="#808080"/>
<rect x="660" y="494" width="1" height="2" fill="#808080"/>
<rect x="660" y="907" width="1" height="2" fill="#808080"/>
<rect x="665" y="494" width="1" height="2" fill="#808080"/>
<rect x="665" y="907" width="1" height="2" fill="#808080"/>
<rect x="669" y="494" width="1" height="2" fill="#808080"/>
<rect x="669" y="899" width="1" height="10"/>
<rect x="673" y="494" width="1" height="2" fill="#808080"/>
<rect x="673" y="907" width="1" height="2" fill="#808080"/>
<rect x="677" y="494" width="1" height="2" fill="#808080"/>
<rect x="677" y="907" width="1" height="2" fill="#808080"/>
<rect x="681" y="494" width="1" height="2" fill="#808080"/>
<rect x="681" y="907" width="1" height="2" fill="#808080"/>
<rect x="685" y="494" width="1" height="2" fill="#808080"/>
<rect x="685" y="907" width="1" height="2" fill="#808080"/>
<rect x="690" y="486" width="1" height="10"/>
<rect x="690" y="899" width="1" height="10"/>
<rect x="694" y="494" width="1" height="2" fill="#808080"/>
<rect x="694" y="907" width="1" height="2" fill="#808080"/>
<rect x="698" y="494" width="1" height="2" fill="#808080"/>
<rect x="698" y="907" width="1" height="2" fill="#808080"/>
<rect x="702" y="494" width="1" height="2" fill="#808080"/>
<rect x="702" y="907" width="1" height="2" fill="#808080"/>
<rect x="706" y="494" width="1" height="2" fill="#808080"/>
<rect x="706" y="907" width="1" height="2" fill="#808080"/>
<rect x="711" y="494" width="1" height="2" fill="#808080"/>
<rect x="711" y="899" width="1" height="10"/>
<rect x="715" y="494" width="1" height="2" fill="#808080"/>
<rect x="715" y="907" width="1" height="2" fill="#808080"/>
<rect x="719" y="494" width="1" height="2" fill="#808080"/>
<rect x="719" y="907" width="1" height="2" fill="#808080"/>
<rect x="723" y="494" width="1" height="2" fill="#808080"/>
<rect x="723" y="907" width="1" height="2" fill="#808080"/>
<rect x="727" y="494" width="1" height="2" fill="#808080"/>
<rect x="727" y="907" width="1" height="2" fill="#808080"/>
<rect x="731" y="486" width="1" height="10"/>
<rect x="731" y="899" width="1" height="10"/>
<rect x="736" y="494" width="1" height="2" fill="#808080"/>
<rect x="736" y="907" width="1" height="2" fill="#808080"/>
<rect x="740" y="494" width="1" height="2" fill="#808080"/>
<rect x="740" y="907" width="1" height="2" fill="#808080"/>
<rect x="744" y="494" width="1" height="2" fill="#808080"/>
<rect x="744" y="907" width="1" height="2" fill="#808080"/>
<rect x="748" y="494" width="1" height="2" fill="#808080"/>
<rect x="748" y="907" width="1" height="2" fill="#808080"/>
<rect x="752" y="494" width="1" height="2" fill="#808080"/>
<rect x="752" y="899" width="1" height="10"/>
<rect x="756" y="494" width="1" height="2" fill="#808080"/>
<rect x="756" y="907" width="1" height="2" fill="#808080"/>
<rect x="761" y="494" width="1" height="2" fill="#808080"/>
<rect x="761" y="907" width="1" height="2" fill="#808080"/>
<rect x="765" y="494" width="1" height="2" fill="#808080"/>
<rect x="765" y="907" width="1" height="2" fill="#808080"/>
<rect x="769" y="494" width="1" height="2" fill="#808080"/>
<rect x="769" y="907" width="1" height="2" fill="#808080"/>
<rect x="773" y="486" width="1" height="10"/>
<rect x="773" y="899" width="1" height="10"/>
<rect x="777" y="494" width="1" height="2" fill="#808080"/>
<rect x="777" y="907" width="1" height="2" fill="#808080"/>
<rect x="782" y="494" width="1" height="2" fill="#808080"/>
<rect x="782" y="907" width="1" height="2" fill="#808080"/>
<rect x="786" y="494" width="1" height="2" fill="#808080"/>
<rect x="786" y="907" width="1" height="2" fill="#808080"/>
<rect x="790" y="494" width="1" height="2" fill="#808080"/>
<rect x="790" y="907" width="1" height="2" fill="#808080"/>
<rect x="794" y="494" width="1" height="2" fill="#808080"/>
<rect x="794" y="899" width="1" height="10"/>
<rect x="798" y="494" width="1" height="2" fill="#808080"/>
<rect x="798" y="907" width="1" height="2" fill="#808080"/>
<rect x="802" y="494" width="1" height="2" fill="#808080"/>
<rect x="802" y="907" width="1" height="2" fill="#808080"/>
<rect x="807" y="494" width="1" height="2" fill="#808080"/>
<rect x="807" y="907" width="1" height="2" fill="#808080"/>
<rect x="811" y="494" width="1" height="2" fill="#808080"/>
<rect x="811" y="907" width="1" height="2" fill="#808080"/>
<rect x="815" y="486" width="1" height="10"/>
<rect x="815" y="899" width="1" height="10"/>
<rect x="819" y="494" width="1" height="2" fill="#808080"/>
<rect x="819" y="907" width="1" height="2" fill="#808080"/>
<rect x="823" y="494" width="1" height="2" fill="#808080"/>
<rect x="823" y="907" width="1" height="2" fill="#808080"/>
<rect x="827" y="494" width="1" height="2" fill="#808080"/>
<rect x="827" y="907" width="1" height="2" fill="#808080"/>
<rect x="832" y="494" width="1" height="2" fill="#808080"/>
<rect x="832" y="907" width="1" height="2" fill="#808080"/>
<rect x="836" y="494" width="1" height="2" fill="#808080"/>
<rect x="836" y="899" width="1" height="10"/>
<rect x="840" y="494" width="1" height="2" fill="#808080"/>
<rect x="840" y="907" width="1" height="2" fill="#808080"/>
<rect x="844" y="494" width="1" height="2" fill="#808080"/>
<rect x="844" y="907" width="1" height="2" fill="#808080"/>
<rect x="848" y="494" width="1" height="2" fill="#808080"/>
<rect x="848" y="907" width="1" height="2" fill="#808080"/>
<rect x="852" y="494" width="1" height="2" fill="#808080"/>
<rect x="852" y="907" width="1" height="2" fill="#808080"/>
<rect x="857" y="486" width="1" height="10"/>
<rect x="857" y="899" width="1" height="10"/>
<rect x="861" y="494" width="1" height="2" fill="#808080"/>
<rect x="861" y="907" width="1" height="2" fill="#808080"/>
<rect x="865" y="494" width="1" height="2" fill="#808080"/>
<rect x="865" y="907" width="1" height="2" fill="#808080"/>
<rect x="869" y="494" width="1" height="2" fill="#808080"/>
<rect x="869" y="907" width="1" height="2" fill="#808080"/>
<rect x="873" y="494" width="1" height="2" fill="#808080"/>
<rect x="873" y="907" width="1" height="2" fill="#808080"/>
<rect x="878" y="494" width="1" height="2" fill="#808080"/>
<rect x="878" y="899" width="1" height="10"/>
<rect x="882" y="494" width="1" height="2" fill="#808080"/>
<rect x="882" y="907" width="1" height="2" fill="#808080"/>
<rect x="886" y="494" width="1" height="2" fill="#808080"/>
<rect x="886" y="907" width="1" height="2" fill="#808080"/>
<rect x="890" y="494" width="1" height="2" fill="#808080"/>
<rect x="890" y="907" width="1" height="2" fill="#808080"/>
<rect x="894" y="494" width="1" height="2" fill="#808080"/>
<rect x="894" y="907" width="1" height="2" fill="#808080"/>
<rect x="898" y="486" width="1" height="10"/>
<rect x="898" y="899" width="1" height="10"/>
<rect x="903" y="494" width="1" height="2" fill="#808080"/>
<rect x="903" y="907" width="1" height="2" fill="#808080"/>
<rect x="907" y="494" width="1" height="2" fill="#808080"/>
<rect x="907" y="907" width="1" height="2" fill="#808080"/>
<rect x="911" y="494" width="1" height="2" fill="#808080"/>
<rect x="911" y="907" width="1" height="2" fill="#808080"/>
<rect x="915" y="494" width="1" height="2" fill="#808080"/>
<rect x="915" y="907" width="1" height="2" fill="#808080"/>
<rect x="919" y="494" width="1" height="2" fill="#808080"/>
<rect x="919" y="899" width="1" height="10"/>
<rect x="923" y="494" width="1" height="2" fill="#808080"/>
<rect x="923" y="907" width="1" height="2" fill="#808080"/>
<rect x="928" y="494" width="1" height="2" fill="#808080"/>
<rect x="928" y="907" width="1" height="2" fill="#808080"/>
<rect x="932" y="494" width="1" height="2" fill="#808080"/>
<rect x="932" y="907" width="1" height="2" fill="#808080"/>
<rect x="936" y="494" width="1" height="2" fill="#808080"/>
<rect x="936" y="907" width="1" height="2" fill="#808080"/>
<rect x="940" y="486" width="1" height="10"/>
<rect x="940" y="899" width="1" height="10"/>
<rect x="944" y="494" width="1" height="2" fill="#808080"/>
<rect x="944" y="907" width="1" height="2" fill="#808080"/>
<rect x="949" y="494" width="1" height="2" fill="#808080"/>
<rect x="949" y="907" width="1" height="2" fill="#808080"/>
<rect x="953" y="494" width="1" height="2" fill="#808080"/>
<rect x="953" y="907" width="1" height="2" fill="#808080"/>
<rect x="957" y="494" width="1" height="2" fill="#808080"/>
<rect x="957" y="907" width="1" height="2" fill="#808080"/>
<rect x="961" y="494" width="1" height="2" fill="#808080"/>
<rect x="961" y="899" width="1" height="10"/>
<rect x="965" y="494" width="1" height="2" fill="#808080"/>
<rect x="965" y="907" width="1" height="2" fill="#808080"/>
<rect x="969" y="494" width="1" height="2" fill="#808080"/>
<rect x="969" y="907" width="1" height="2" fill="#808080"/>
<rect x="974" y="494" width="1" height="2" fill="#808080"/>
<rect x="974" y="907" width="1" height="2" fill="#808080"/>
<rect x="978" y="494" width="1" height="2" fill="#808080"/>
<rect x="978" y="907" width="1" height="2" fill="#808080"/>
<rect x="982" y="486" width="1" height="10"/>
<rect x="982" y="899" width="1" height="10"/>
<rect x="986" y="494" width="1" height="2" fill="#808080"/>
<rect x="986" y="907" width="1" height="2" fill="#808080"/>
<rect x="990" y="494" width="1" height="2" fill="#808080"/>
<rect x="990" y="907" width="1" height="2" fill="#808080"/>
<rect x="994" y="494" width="1" height="2" fill="#808080"/>
<rect x="994" y="907" width="1" height="2" fill="#808080"/>
<rect x="999" y="494" width="1" height="2" fill="#808080"/>
<rect x="999" y="907" width="1" height="2" fill="#808080"/>
<rect x="1003" y="494" width="1" height="2" fill="#808080"/>
<rect x="1003" y="899" width="1" height="10"/>
<rect x="1007" y="494" width="1" height="2" fill="#808080"/>
<rect x="1007" y="907" width="1" height="2" fill="#808080"/>
<rect x="1011" y="494" width="1" height="2" fill="#808080"/>
<rect x="1011" y="907" width="1" height="2" fill="#808080"/>
<rect x="1015" y="494" width="1" height="2" fill="#808080"/>
<rect x="1015" y="907" width="1" height="2" fill="#808080"/>
<rect x="1020" y="494" width="1" height="2" fill="#808080"/>
<rect x="1020" y="907" width="1" height="2" fill="#808080"/>
<rect x="1024" y="486" width="1" height="10"/>
<rect x="1024" y="899" width="1" height="10"/>
<rect x="1028" y="494" width="1" height="2" fill="#808080"/>
<rect x="1028" y="907" width="1" height="2" fill="#808080"/>
<rect x="1032" y="494" width="1" height="2" fill="#808080"/>
<rect x="1032" y="907" width="1" height="2" fill="#808080"/>
<rect x="1036" y="494" width="1" height="2" fill="#808080"/>
<rect x="1036" y="907" width="1" height="2" fill="#808080"/>
<rect x="1040" y="494" width="1" height="2" fill="#808080"/>
<rect x="1040" y="907" width="1" height="2" fill="#808080"/>
<rect x="1045" y="494" width="1" height="2" fill="#808080"/>
<rect x="1045" y="899" width="1" height="10"/>
<rect x="1049" y="494" width="1" height="2" fill="#808080"/>
<rect x="1049" y="907" width="1" height="2" fill="#808080"/>
<rect x="1053" y="494" width="1" height="2" fill="#808080"/>
<rect x="1053" y="907" width="1" height="2" fill="#808080"/>
<rect x="1057" y="494" width="1" height="2" fill="#808080"/>
<rect x="1057" y="907" width="1" height="2" fill="#808080"/>
<rect x="1061" y="494" width="1" height="2" fill="#808080"/>
<rect x="1061" y="907" width="1" height="2" fill="#808080"/>
<rect x="1065" y="486" width="1" height="10"/>
<rect x="1065" y="899" width="1" height="10"/>
<rect x="1070" y="494" width="1" height="2" fill="#808080"/>
<rect x="1070" y="907" width="1" height="2" fill="#808080"/>
<rect x="1074" y="494" width="1" height="2" fill="#808080"/>
<rect x="1074" y="907" width="1" height="2" fill="#808080"/>
<rect x="1078" y="494" width="1" height="2" fill="#808080"/>
<rect x="1078" y="907" width="1" height="2" fill="#808080"/>
<rect x="1082" y="494" width="1" height="2" fill="#808080"/>
<rect x="1082" y="907" width="1" height="2" fill="#808080"/>
<rect x="1086" y="494" width="1" height="2" fill="#808080"/>
<rect x="1086" y="899" width="1" height="10"/>
<rect x="1090" y="494" width="1" height="2" fill="#808080"/>
<rect x="1090" y="907" width="1" height="2" fill="#808080"/>
<rect x="1095" y="494" width="1" height="2" fill="#808080"/>
<rect x="1095" y="907" width="1" height="2" fill="#808080"/>
<rect x="1099" y="494" width="1" height="2" fill="#808080"/>
<rect x="1099" y="907" width="1" height="2" fill="#808080"/>
<rect x="1103" y="494" width="1" height="2" fill="#808080"/>
<rect x="1103" y="907" width="1" height="2" fill="#808080"/>
<rect x="1107" y="486" width="1" height="10"/>
<rect x="1107" y="899" width="1" height="10"/>
<rect x="1111" y="494" width="1" height="2" fill="#808080"/>
<rect x="1111" y="907" width="1" height="2" fill="#808080"/>
<rect x="1116" y="494" width="1" height="2" fill="#808080"/>
<rect x="1116" y="907" width="1" height="2" fill="#808080"/>
<rect x="1120" y="494" width="1" height="2" fill="#808080"/>
<rect x="1120" y="907" width="1" height="2" fill="#808080"/>
<rect x="1124" y="494" width="1" height="2" fill="#808080"/>
<rect x="1124" y="907" width="1" height="2" fill="#808080"/>
<rect x="1128" y="494" width="1" height="2" fill="#808080"/>
<rect x="1128" y="899" width="1" height="10"/>
<rect x="1132" y="494" width="1" height="2" fill="#808080"/>
<rect x="1132" y="907" width="1" height="2" fill="#808080"/>
<rect x="1136" y="494" width="1" height="2" fill="#808080"/>
<rect x="1136" y="907" width="1" height="2" fill="#808080"/>
<rect x="1141" y="494" width="1" height="2" fill="#808080"/>
<rect x="1141" y="907" width="1" height="2" fill="#808080"/>
<rect x="1145" y="494" width="1" height="2" fill="#808080"/>
<rect x="1145" y="907" width="1" height="2" fill="#808080"/>
<rect x="1149" y="486" width="1" height="10"/>
<rect x="1149" y="899" width="1" height="10"/>
<rect x="1153" y="494" width="1" height="2" fill="#808080"/>
<rect x="1153" y="907" width="1" height="2" fill="#808080"/>
<rect x="1157" y="494" width="1" height="2" fill="#808080"/>
<rect x="1157" y="907" width="1" height="2" fill="#808080"/>
<rect x="1161" y="494" width="1" height="2" fill="#808080"/>
<rect x="1161" y="907" width="1" height="2" fill="#808080"/>
<rect x="1166" y="494" width="1" height="2" fill="#808080"/>
<rect x="1166" y="907" width="1" height="2" fill="#808080"/>
<rect x="1170" y="494" width="1" height="2" fill="#808080"/>
<rect x="1170" y="899" width="1" height="10"/>
<rect x="1174" y="494" width="1" height="2" fill="#808080"/>
<rect x="1174" y="907" width="1" height="2" fill="#808080"/>
<rect x="1178" y="494" width="1" height="2" fill="#808080"/>
<rect x="1178" y="907" width="1" height="2" fill="#808080"/>
<rect x="1182" y="494" width="1" height="2" fill="#808080"/>
<rect x="1182" y="907" width="1" height="2" fill="#808080"/>
<rect x="1187" y="494" width="1" height="2" fill="#808080"/>
<rect x="1187" y="907" width="1" height="2" fill="#808080"/>
<rect x="1191" y="486" width="1" height="10"/>
<rect x="1191" y="899" width="1" height="10"/>
<rect x="1195" y="494" width="1" height="2" fill="#808080"/>
<rect x="1195" y="907" width="1" height="2" fill="#808080"/>
<rect x="1199" y="494" width="1" height="2" fill="#808080"/>
<rect x="1199" y="907" width="1" height="2" fill="#808080"/>
<rect x="1203" y="494" width="1" height="2" fill="#808080"/>
<rect x="1203" y="907" width="1" height="2" fill="#808080"/>
<rect x="1207" y="494" width="1" height="2" fill="#808080"/>
<rect x="1207" y="907" width="1" height="2" fill="#808080"/>
<rect x="1212" y="494" width="1" height="2" fill="#808080"/>
<rect x="1212" y="899" width="1" height="10"/>
<rect x="1216" y="494" width="1" height="2" fill="#808080"/>
<rect x="1216" y="907" width="1" height="2" fill="#808080"/>
<rect x="1220" y="494" width="1" height="2" fill="#808080"/>
<rect x="1220" y="907" width="1" height="2" fill="#808080"/>
<rect x="1224" y="494" width="1" height="2" fill="#808080"/>
<rect x="1224" y="907" width="1" height="2" fill="#808080"/>
<rect x="1228" y="494" width="1" height="2" fill="#808080"/>
<rect x="1228" y="907" width="1" height="2" fill="#808080"/>
<rect x="1232" y="486" width="1" height="10"/>
<rect x="1232" y="899" width="1" height="10"/>
<rect x="1237" y="494" width="1" height="2" fill="#808080"/>
<rect x="1237" y="907" width="1" height="2" fill="#808080"/>
<rect x="1241" y="494" width="1" height="2" fill="#808080"/>
<rect x="1241" y="907" width="1" height="2" fill="#808080"/>
<rect x="1245" y="494" width="1" height="2" fill="#808080"/>
<rect x="1245" y="907" width="1" height="2" fill="#808080"/>
<rect x="1249" y="494" width="1" height="2" fill="#808080"/>
<rect x="1249" y="907" width="1" height="2" fill="#808080"/>
<rect x="1253" y="494" width="1" height="2" fill="#808080"/>
<rect x="1253" y="899" width="1" height="10"/>
<rect x="1258" y="494" width="1" height="2" fill="#808080"/>
<rect x="1258" y="907" width="1" height="2" fill="#808080"/>
<rect x="1262" y="494" width="1" height="2" fill="#808080"/>
<rect x="1262" y="907" width="1" height="2" fill="#808080"/>
<rect x="1266" y="494" width="1" height="2" fill="#808080"/>
<rect x="1266" y="907" width="1" height="2" fill="#808080"/>
<rect x="1270" y="494" width="1" height="2" fill="#808080"/>
<rect x="1270" y="907" width="1" height="2" fill="#808080"/>
<rect x="1274" y="486" width="1" height="10"/>
<rect x="1274" y="899" width="1" height="10"/>
<rect x="1278" y="494" width="1" height="2" fill="#808080"/>
<rect x="1278" y="907" width="1" height="2" fill="#808080"/>
<rect x="1283" y="494" width="1" height="2" fill="#808080"/>
<rect x="1283" y="907" width="1" height="2" fill="#808080"/>
<rect x="1287" y="494" width="1" height="2" fill="#808080"/>
<rect x="1287" y="907" width="1" height="2" fill="#808080"/>
<rect x="1291" y="494" width="1" height="2" fill="#808080"/>
<rect x="1291" y="907" width="1" height="2" fill="#808080"/>
<rect x="1295" y="494" width="1" height="2" fill="#808080"/>
<rect x="1295" y="899" width="1" height="10"/>
<rect x="1299" y="494" width="1" height="2" fill="#808080"/>
<rect x="1299" y="907" width="1" height="2" fill="#808080"/>
<rect x="1303" y="494" width="1" height="2" fill="#808080"/>
<rect x="1303" y="907" width="1" height="2" fill="#808080"/>
<rect x="1308" y="494" width="1" height="2" fill="#808080"/>
<rect x="1308" y="907" width="1" height="2" fill="#808080"/>
<rect x="1312" y="494" width="1" height="2" fill="#808080"/>
<rect x="1312" y="907" width="1" height="2" fill="#808080"/>
<rect x="1316" y="486" width="1" height="10"/>
<rect x="1316" y="899" width="1" height="10"/>
<rect x="1320" y="494" width="1" height="2" fill="#808080"/>
<rect x="1320" y="907" width="1" height="2" fill="#808080"/>
<rect x="1324" y="494" width="1" height="2" fill="#808080"/>
<rect x="1324" y="907" width="1" height="2" fill="#808080"/>
<rect x="1328" y="494" width="1" height="2" fill="#808080"/>
<rect x="1328" y="907" width="1" height="2" fill="#808080"/>
<rect x="1333" y="494" width="1" height="2" fill="#808080"/>
<rect x="1333" y="907" width="1" height="2" fill="#808080"/>
<rect x="1337" y="494" width="1" height="2" fill="#808080"/>
<rect x="1337" y="899" width="1" height="10"/>
<rect x="1341" y="494" width="1" height="2" fill="#808080"/>
<rect x="1341" y="907" width="1" height="2" fill="#808080"/>
<rect x="1345" y="494" width="1" height="2" fill="#808080"/>
<rect x="1345" y="907" width="1" height="2" fill="#808080"/>
<rect x="1349" y="494" width="1" height="2" fill="#808080"/>
<rect x="1349" y="907" width="1" height="2" fill="#808080"/>
<rect x="1354" y="494" width="1" height="2" fill="#808080"/>
<rect x="1354" y="907" width="1" height="2" fill="#808080"/>
<rect x="1358" y="486" width="1" height="10"/>
<rect x="1358" y="899" width="1" height="10"/>
<rect x="1362" y="494" width="1" height="2" fill="#808080"/>
<rect x="1362" y="907" width="1" height="2" fill="#808080"/>
<rect x="1366" y="494" width="1" height="2" fill="#808080"/>
<rect x="1366" y="907" width="1" height="2" fill="#808080"/>
<rect x="1370" y="494" width="1" height="2" fill="#808080"/>
<rect x="1370" y="907" width="1" height="2" fill="#808080"/>
<rect x="1374" y="494" width="1" height="2" fill="#808080"/>
<rect x="1374" y="907" width="1" height="2" fill="#808080"/>
<rect x="1379" y="494" width="1" height="2" fill="#808080"/>
<rect x="1379" y="899" width="1" height="10"/>
<rect x="1383" y="494" width="1" height="2" fill="#808080"/>
<rect x="1383" y="907" width="1" height="2" fill="#808080"/>
<rect x="1387" y="494" width="1" height="2" fill="#808080"/>
<rect x="1387" y="907" width="1" height="2" fill="#808080"/>
<rect x="1391" y="494" width="1" height="2" fill="#808080"/>
<rect x="1391" y="907" width="1" height="2" fill="#808080"/>
<rect x="1395" y="494" width="1" height="2" fill="#808080"/>
<rect x="1395" y="907" width="1" height="2" fill="#808080"/>
<rect x="1399" y="486" width="1" height="10"/>
<rect x="1399" y="899" width="1" height="10"/>
<rect x="1404" y="494" width="1" height="2" fill="#808080"/>
<rect x="1404" y="907" width="1" height="2" fill="#808080"/>
<rect x="1408" y="494" width="1" height="2" fill="#808080"/>
<rect x="1408" y="907" width="1" height="2" fill="#808080"/>
<rect x="1412" y="494" width="1" height="2" fill="#808080"/>
<rect x="1412" y="907" width="1" height="2" fill="#808080"/>
<rect x="1416" y="494" width="1" height="2" fill="#808080"/>
<rect x="1416" y="907" width="1" height="2" fill="#808080"/>
<rect x="1420" y="494" width="1" height="2" fill="#808080"/>
<rect x="1420" y="899" width="1" height="10"/>
<rect x="1425" y="494" width="1" height="2" fill="#808080"/>
<rect x="1425" y="907" width="1" height="2" fill="#808080"/>
<rect x="1429" y="494" width="1" height="2" fill="#808080"/>
<rect x="1429" y="907" width="1" height="2" fill="#808080"/>
<rect x="1433" y="494" width="1" height="2" fill="#808080"/>
<rect x="1433" y="907" width="1" height="2" fill="#808080"/>
<rect x="1437" y="494" width="1" height="2" fill="#808080"/>
<rect x="1437" y="907" width="1" height="2" fill="#808080"/>
<rect x="1441" y="486" width="1" height="10"/>
<rect x="1441" y="899" width="1" height="10"/>
<rect x="1445" y="494" width="1" height="2" fill="#808080"/>
<rect x="1445" y="907" width="1" height="2" fill="#808080"/>
<rect x="1450" y="494" width="1" height="2" fill="#808080"/>
<rect x="1450" y="907" width="1" height="2" fill="#808080"/>
<rect x="1454" y="494" width="1" height="2" fill="#808080"/>
<rect x="1454" y="907" width="1" height="2" fill="#808080"/>
<rect x="1458" y="494" width="1" height="2" fill="#808080"/>
<rect x="1458" y="907" width="1" height="2" fill="#808080"/>
<rect x="1462" y="494" width="1" height="2" fill="#808080"/>
<rect x="1462" y="899" width="1" height="10"/>
<rect x="1466" y="494" width="1" height="2" fill="#808080"/>
<rect x="1466" y="907" width="1" height="2" fill="#808080"/>
<rect x="1470" y="494" width="1" height="2" fill="#808080"/>
<rect x="1470" y="907" width="1" height="2" fill="#808080"/>
<rect x="1475" y="494" width="1" height="2" fill="#808080"/>
<rect x="1475" y="907" width="1" height="2" fill="#808080"/>
<rect x="1479" y="494" width="1" height="2" fill="#808080"/>
<rect x="1479" y="907" width="1" height="2" fill="#808080"/>
<rect x="1483" y="486" width="1" height="10"/>
<rect x="1483" y="899" width="1" height="10"/>
<rect x="1487" y="494" width="1" height="2" fill="#808080"/>
<rect x="1487" y="907" width="1" height="2" fill="#808080"/>
<rect x="1491" y="494" width="1" height="2" fill="#808080"/>
<rect x="1491" y="907" width="1" height="2" fill="#808080"/>
<rect x="1496" y="494" width="1" height="2" fill="#808080"/>
<rect x="1496" y="907" width="1" height="2" fill="#808080"/>
<rect x="1500" y="494" width="1" height="2" fill="#808080"/>
<rect x="1500" y="907" width="1" height="2" fill="#808080"/>
<rect x="1504" y="494" width="1" height="2" fill="#808080"/>
<rect x="1504" y="899" width="1" height="10"/>
<rect x="1508" y="494" width="1" height="2" fill="#808080"/>
<rect x="1508" y="907" width="1" height="2" fill="#808080"/>
<rect x="1512" y="494" width="1" height="2" fill="#808080"/>
<rect x="1512" y="907" width="1" height="2" fill="#808080"/>
<rect x="1516" y="494" width="1" height="2" fill="#808080"/>
<rect x="1516" y="907" width="1" height="2" fill="#808080"/>
<rect x="1521" y="494" width="1" height="2" fill="#808080"/>
<rect x="1521" y="907" width="1" height="2" fill="#808080"/>
<rect x="1525" y="486" width="1" height="10"/>
<rect x="1525" y="899" width="1" height="10"/>
<rect x="1529" y="494" width="1" height="2" fill="#808080"/>
<rect x="1529" y="907" width="1" height="2" fill="#808080"/>
<rect x="1533" y="494" width="1" height="2" fill="#808080"/>
<rect x="1533" y="907" width="1" height="2" fill="#808080"/>
<rect x="1537" y="494" width="1" height="2" fill="#808080"/>
<rect x="1537" y="907" width="1" height="2" fill="#808080"/>
<rect x="1541" y="494" width="1" height="2" fill="#808080"/>
<rect x="1541" y="907" width="1" height="2" fill="#808080"/>
<rect x="1546" y="494" width="1" height="2" fill="#808080"/>
<rect x="1546" y="899" width="1" height="10"/>
<rect x="1550" y="494" width="1" height="2" fill="#808080"/>
<rect x="1550" y="907" width="1" height="2" fill="#808080"/>
<rect x="1554" y="494" width="1" height="2" fill="#808080"/>
<rect x="1554" y="907" width="1" height="2" fill="#808080"/>
<rect x="1558" y="494" width="1" height="2" fill="#808080"/>
<rect x="1558" y="907" width="1" height="2" fill="#808080"/>
<rect x="1562" y="494" width="1" height="2" fill="#808080"/>
<rect x="1562" y="907" width="1" height="2" fill="#808080"/>
<rect x="1566" y="486" width="1" height="10"/>
<rect x="1566" y="899" width="1" height="10"/>
<rect x="1571" y="494" width="1" height="2" fill="#808080"/>
<rect x="1571" y="907" width="1" height="2" fill="#808080"/>
<rect x="1575" y="494" width="1" height="2" fill="#808080"/>
<rect x="1575" y="907" width="1" height="2" fill="#808080"/>
<rect x="1579" y="494" width="1" height="2" fill="#808080"/>
<rect x="1579" y="907" width="1" height="2" fill="#808080"/>
<rect x="1583" y="494" width="1" height="2" fill="#808080"/>
<rect x="1583" y="907" width="1" height="2" fill="#808080"/>
<rect x="1587" y="494" width="1" height="2" fill="#808080"/>
<rect x="1587" y="899" width="1" height="10"/>
<rect x="1592" y="494" width="1" height="2" fill="#808080"/>
<rect x="1592" y="907" width="1" height="2" fill="#808080"/>
<rect x="1596" y="494" width="1" height="2" fill="#808080"/>
<rect x="1596" y="907" width="1" height="2" fill="#808080"/>
<rect x="1600" y="494" width="1" height="2" fill="#808080"/>
<rect x="1600" y="907" width="1" height="2" fill="#808080"/>
<rect x="1604" y="494" width="1" height="2" fill="#808080"/>
<rect x="1604" y="907" width="1" height="2" fill="#808080"/>
<rect x="1608" y="486" width="1" height="10"/>
<rect x="1608" y="899" width="1" height="10"/>
<rect x="1612" y="494" width="1" height="2" fill="#808080"/>
<rect x="1612" y="907" width="1" height="2" fill="#808080"/>
<rect x="1617" y="494" width="1" height="2" fill="#808080"/>
<rect x="1617" y="907" width="1" height="2" fill="#808080"/>
<rect x="1621" y="494" width="1" height="2" fill="#808080"/>
<rect x="1621" y="907" width="1" height="2" fill="#808080"/>
<rect x="1625" y="494" width="1" height="2" fill="#808080"/>
<rect x="1625" y="907" width="1" height="2" fill="#808080"/>
<rect x="1629" y="494" width="1" height="2" fill="#808080"/>
<rect x="1629" y="899" width="1" height="10"/>
<rect x="1633" y="494" width="1" height="2" fill="#808080"/>
<rect x="1633" y="907" width="1" height="2" fill="#808080"/>
<rect x="1637" y="494" width="1" height="2" fill="#808080"/>
<rect x="1637" y="907" width="1" height="2" fill="#808080"/>
<rect x="1642" y="494" width="1" height="2" fill="#808080"/>
<rect x="1642" y="907" width="1" height="2" fill="#808080"/>
<rect x="1646" y="494" width="1" height="2" fill="#808080"/>
<rect x="1646" y="907" width="1" height="2" fill="#808080"/>
<rect x="1650" y="486" width="1" height="10"/>
<rect x="1650" y="899" width="1" height="10"/>
<rect x="1654" y="494" width="1" height="2" fill="#808080"/>
<rect x="1654" y="907" width="1" height="2" fill="#808080"/>
<rect x="1658" y="494" width="1" height="2" fill="#808080"/>
<rect x="1658" y="907" width="1" height="2" fill="#808080"/>
<rect x="1663" y="494" width="1" height="2" fill="#808080"/>
<rect x="1663" y="907" width="1" height="2" fill="#808080"/>
<rect x="1667" y="494" width="1" height="2" fill="#808080"/>
<rect x="1667" y="907" width="1" height="2" fill="#808080"/>
<rect x="1671" y="494" width="1" height="2" fill="#808080"/>
<rect x="1671" y="899" width="1" height="10"/>
<rect x="1675" y="494" width="1" height="2" fill="#808080"/>
<rect x="1675" y="907" width="1" height="2" fill="#808080"/>
<rect x="1679" y="494" width="1" height="2" fill="#808080"/>
<rect x="1679" y="907" width="1" height="2" fill="#808080"/>
<rect x="1683" y="494" width="1" height="2" fill="#808080"/>
<rect x="1683" y="907" width="1" height="2" fill="#808080"/>
<rect x="1688" y="494" width="1" height="2" fill="#808080"/>
<rect x="1688" y="907" width="1" height="2" fill="#808080"/>
<rect x="1692" y="486" width="1" height="10"/>
<rect x="1692" y="899" width="1" height="10"/>
<rect x="1696" y="494" width="1" height="2" fill="#808080"/>
<rect x="1696" y="907" width="1" height="2" fill="#808080"/>
<rect x="1700" y="494" width="1" height="2" fill="#808080"/>
<rect x="1700" y="907" width="1" height="2" fill="#808080"/>
<rect x="1704" y="494" width="1" height="2" fill="#808080"/>
<rect x="1704" y="907" width="1" height="2" fill="#808080"/>
<rect x="1708" y="494" width="1" height="2" fill="#808080"/>
<rect x="1708" y="907" width="1" height="2" fill="#808080"/>
<rect x="1713" y="494" width="1" height="2" fill="#808080"/>
<rect x="1713" y="899" width="1" height="10"/>
<rect x="1717" y="494" width="1" height="2" fill="#808080"/>
<rect x="1717" y="907" width="1" height="2" fill="#808080"/>
<rect x="1721" y="494" width="1" height="2" fill="#808080"/>
<rect x="1721" y="907" width="1" height="2" fill="#808080"/>
<rect x="1725" y="494" width="1" height="2" fill="#808080"/>
<rect x="1725" y="907" width="1" height="2" fill="#808080"/>
<rect x="1729" y="494" width="1" height="2" fill="#808080"/>
<rect x="1729" y="907" width="1" height="2" fill="#808080"/>
<rect x="1734" y="486" width="1" height="10"/>
<rect x="1734" y="899" width="1" height="10"/>
<rect x="1738" y="494" width="1" height="2" fill="#808080"/>
<rect x="1738" y="907" width="1" height="2" fill="#808080"/>
<rect x="1742" y="494" width="1" height="2" fill="#808080"/>
<rect x="1742" y="907" width="1" height="2" fill="#808080"/>
<rect x="1746" y="494" width="1" height="2" fill="#808080"/>
<rect x="1746" y="907" width="1" height="2" fill="#808080"/>
<rect x="1750" y="494" width="1" height="2" fill="#808080"/>
<rect x="1750" y="907" width="1" height="2" fill="#808080"/>
<rect x="1754" y="494" width="1" height="2" fill="#808080"/>
<rect x="1754" y="899" width="1" height="10"/>
<rect x="8" y="496" width="1748" height="4" fill="#808080"/>
<rect x="8" y="500" width="1748" height="1" fill="#000"/>
<rect x="8" y="909" width="1748" height="1" fill="#000"/>
<rect x="8" y="753" width="1749" height="1" fill="#000"/>
</g>
<g clip-path="url(#cu)" fill="none">
<polyline points="557.5,258.1 568.0,260.5 576.2,262.6 584.0,265.8 592.0,269.3 605.6,275.6 614.4,285.6 618.8,288.8 621.9,293.1 629.4,310.0 637.5,326.5 645.0,326.2 655.0,324.4 661.2,325.6 668.8,325.2 678.8,323.5 690.0,316.9 701.9,310.0 710.0,302.5 718.1,294.4 725.0,283.8 731.9,271.9 737.8,262.5 741.2,253.8 746.2,243.8 753.8,231.5 761.2,216.5 768.8,202.8 778.8,184.0 790.0,163.0" stroke="#000" stroke-width="1"/>
<polyline points="866.0,171.0 873.1,184.0 878.8,194.0 882.5,201.5 886.2,211.5 891.9,226.5 898.8,242.8 902.5,255.2 907.5,269.0 912.5,284.0 917.5,296.5 920.6,305.0 923.8,312.5 930.6,330.0 937.5,352.5 946.2,376.2 947.5,380.0 953.8,400.0 960.6,418.8 963.8,431.2 967.5,441.2 971.2,453.8 976.2,466.2 986.2,470.0 996.2,475.6 999.4,475.0 1006.2,467.5 1013.8,458.1 1017.5,455.6 1022.5,452.5 1027.5,446.2 1036.2,435.0 1042.5,430.6 1045.6,423.5 1051.9,423.5 1057.5,425.6 1065.0,431.2 1071.2,435.0 1076.5,438.1 1078.8,427.5 1082.5,405.0 1085.6,388.8 1088.1,382.5 1095.0,381.2 1102.5,380.4 1107.5,380.6 1113.8,382.5 1119.4,386.0 1128.8,386.2 1133.8,390.0 1140.0,393.8 1150.6,403.1 1157.5,404.0 1163.8,404.4 1170.0,408.1 1181.2,413.4 1201.2,418.1 1208.8,426.2 1219.4,442.5 1225.0,436.2 1230.6,433.1 1242.5,430.6 1253.8,429.1 1268.8,427.2 1291.2,426.2 1310.0,425.0 1316.0,424.0" stroke="#000" stroke-width="1"/>
<path d="M441 224.8L557.5 258.1" stroke="#000" stroke-width="1.1" stroke-dasharray="7 3 2 3"/>
<path d="M1316 424L1393 412.2" stroke="#000" stroke-width="1.1" stroke-dasharray="9 3 2 3"/>
<polyline points="439.6,224.5 543.6,253.6 546.0,254.3 548.5,254.9 550.9,255.6 553.4,256.2 555.8,256.7 558.3,257.3 560.8,257.8 563.2,258.3 565.7,258.8 568.1,259.2 570.6,259.7 573.0,260.1 575.5,260.4 577.9,260.8 580.4,261.1 582.8,261.4 585.3,261.7 587.7,261.9 590.2,262.1 592.6,262.3 595.1,262.5 597.5,262.6 600.0,262.8 602.5,262.9 604.9,262.9 607.4,263.0 609.8,263.0 612.3,263.0 614.7,263.0 617.2,262.9 619.6,262.8 622.1,262.7 624.5,262.6 627.0,262.4 629.4,262.3 631.9,262.1 634.3,261.8 636.8,261.6 639.3,261.3 641.7,261.0 739.0,248.3 742.5,247.9 746.1,247.5 749.6,247.2 753.2,246.8 756.7,246.6 760.2,246.4 763.8,246.2 767.3,246.1 770.9,246.0 774.4,246.0 778.0,246.0 781.5,246.1 785.0,246.2 788.6,246.3 792.1,246.5 795.7,246.8 799.2,247.1 802.8,247.4 806.3,247.8 809.8,248.2 813.4,248.7 816.9,249.2 820.5,249.8 824.0,250.4 827.5,251.0 831.1,251.7 834.6,252.5 838.2,253.3 841.7,254.1 845.3,255.0 848.8,255.9 852.3,256.9 855.9,257.9 859.4,259.0 863.0,260.1 866.5,261.2 870.1,262.4 873.6,263.7 877.1,264.9 880.7,266.3 884.2,267.7 887.8,269.1 891.3,270.6 894.9,272.1 898.4,273.6 901.9,275.3 905.5,276.9 909.0,278.6 912.6,280.3 916.1,282.1 919.6,284.0 923.2,285.9 926.7,287.8 930.3,289.8 933.8,291.8 937.4,293.8 940.9,295.9 944.4,298.1 948.0,300.3 951.5,302.5 1068.0,377.1 1071.7,379.5 1075.5,381.8 1079.2,384.1 1082.9,386.3 1086.6,388.4 1090.4,390.5 1094.1,392.6 1097.8,394.6 1101.5,396.5 1105.3,398.5 1109.0,400.3 1112.7,402.1 1116.4,403.9 1120.1,405.6 1123.9,407.2 1127.6,408.8 1131.3,410.4 1135.0,411.9 1138.8,413.3 1142.5,414.7 1146.2,416.1 1149.9,417.4 1153.7,418.7 1157.4,419.9 1161.1,421.0 1164.8,422.1 1168.5,423.2 1172.3,424.2 1176.0,425.1 1179.7,426.0 1183.4,426.9 1187.2,427.7 1190.9,428.4 1194.6,429.1 1198.3,429.8 1202.1,430.4 1205.8,430.9 1209.5,431.4 1213.2,431.9 1216.9,432.3 1220.7,432.6 1224.4,432.9 1228.1,433.1 1231.8,433.3 1235.6,433.5 1239.3,433.6 1243.0,433.6 1246.7,433.6 1250.5,433.6 1254.2,433.5 1257.9,433.3 1261.6,433.1 1265.3,432.8 1269.1,432.5 1272.8,432.2 1276.5,431.8 1280.2,431.3 1284.0,430.8 1287.7,430.3 1291.4,429.6 1394.5,412.1" stroke="#ff0000" stroke-width="1" stroke-dasharray="8 6 3 6"/>
<rect x="437.5" y="222.0" width="5" height="5" stroke="#ff0000" stroke-width="1"/>
<path d="M439.6 216V230.6" stroke="#ff0000" stroke-width="1"/>
<path d="M518.5 239V252.8" stroke="#ff0000" stroke-width="1"/>
<path d="M544.5 208.8V256.5" stroke="#ff0000" stroke-width="1"/>
<path d="M641.5 216.2V264.8" stroke="#ff0000" stroke-width="1"/>
<rect x="590.7" y="265.1" width="5" height="5" stroke="#ff0000" stroke-width="1"/>
<path d="M584.8 261V264" stroke="#ff0000" stroke-width="1"/>
<path d="M631.5 261V264" stroke="#ff0000" stroke-width="1"/>
<path d="M739 241.2V293.8" stroke="#ff0000" stroke-width="1"/>
<path d="M738.500 245V255.600" stroke="#ff0000" stroke-width="2"/>
<rect x="843.0" y="233.1" width="5" height="5" stroke="#ff0000" stroke-width="1"/>
<path d="M892.5 264.4V277.5" stroke="#ff0000" stroke-width="1"/>
<path d="M951.6 245V359.8" stroke="#ff0000" stroke-width="1"/>
<path d="M894 302.3H1010" stroke="#ff0000" stroke-width="1"/>
<path d="M1067.5 326.9V379.8" stroke="#ff0000" stroke-width="1"/>
<rect x="1176.75" y="444.95" width="4.5" height="4.5" stroke="#ff0000" stroke-width="1"/>
<path d="M1291.6 378.8V434.8" stroke="#ff0000" stroke-width="1"/>
<path d="M1292.100 421.200V431.200" stroke="#ff0000" stroke-width="2"/>
<rect x="1392.4" y="409.3" width="4.6" height="4.6" stroke="#ff0000" stroke-width="1"/>
<path d="M1394.7 404V417.8" stroke="#ff0000" stroke-width="1"/>
<text transform="translate(554.6,252) rotate(-90)" style="font-size:10px;fill:#ff0000;stroke:none;letter-spacing:0.1px">BVC 2+49</text>
<text transform="translate(637.6,261) rotate(-90)" style="font-size:10px;fill:#ff0000;stroke:none;letter-spacing:0.15px">EVC 4+84</text>
<text transform="translate(751,297) rotate(-90)" style="font-size:10px;fill:#ff0000;stroke:none;letter-spacing:0.4px">BVC 7+17</text>
<text transform="translate(949,356.5) rotate(-90)" style="font-size:10px;fill:#ff0000;stroke:none;letter-spacing:0.45px">EVC 12+26</text>
<text transform="translate(1078,376.3) rotate(-90)" style="font-size:10px;fill:#ff0000;stroke:none;letter-spacing:0.3px">BVC 15+05</text>
<text transform="translate(1290,429) rotate(-90)" style="font-size:10px;fill:#ff0000;stroke:none;letter-spacing:0.3px">EVC 20+40</text>
<text transform="translate(483,233.5) rotate(15)" style="font-size:10px;fill:#ff0000;stroke:none;letter-spacing:0.3px">-2.8</text>
<text transform="translate(585.2,247.3) rotate(1)" style="font-size:10px;fill:#ff0000;stroke:none;letter-spacing:0.2px">VC1</text>
<text transform="translate(572.5,257.6) rotate(3)" style="font-size:10px;fill:#ff0000;stroke:none;letter-spacing:0px">K=57.022</text>
<text transform="translate(683,252.6) rotate(-4)" style="font-size:10px;fill:#ff0000;stroke:none;letter-spacing:0.3px">1.3</text>
<text transform="translate(834,246.5) rotate(15)" style="font-size:10px;fill:#ff0000;stroke:none;letter-spacing:0.2px">VC2</text>
<text transform="translate(819,257) rotate(14)" style="font-size:10px;fill:#ff0000;stroke:none;letter-spacing:0px">K=66.582</text>
<text transform="translate(1005,335) rotate(30)" style="font-size:10px;fill:#ff0000;stroke:none;letter-spacing:0.3px">-6.4</text>
<text transform="translate(1175,425.5) rotate(10)" style="font-size:10px;fill:#ff0000;stroke:none;letter-spacing:0.3px">VC3</text>
<text transform="translate(1160.5,436) rotate(11)" style="font-size:10px;fill:#ff0000;stroke:none;letter-spacing:0px">K=66.582</text>
<text transform="translate(1333.7,416.5) rotate(-7)" style="font-size:10px;fill:#ff0000;stroke:none;letter-spacing:0.3px">1.7</text>
</g>
<g clip-path="url(#cl)">
<path d="M441.7 753.3 L462.0 750.2 L488.0 749.2 L515.0 748.4 L539.8 746.5 L557.0 743.2 L558.0 743.0 L558.0 753.5 L441.7 753.5Z" fill="url(#ho)" stroke="none" shape-rendering="crispEdges"/>
<path d="M600.0 743.2 L600.2 743.2 L615.0 746.5 L620.0 749.4 L627.4 753.4 L627.4 753.5 L600.0 753.5Z" fill="url(#ho)" stroke="none" shape-rendering="crispEdges"/>
<path d="M627.4 753.4 L627.5 753.5 L636.2 758.1 L645.0 765.0 L656.2 774.4 L665.0 782.5 L674.4 791.9 L685.0 802.5 L695.0 813.1 L705.0 823.8 L712.5 830.0 L718.0 833.4 L718.0 753.5 L627.4 753.5Z" fill="url(#ho)" stroke="none" shape-rendering="crispEdges"/>
<path d="M758.0 834.5 L758.1 834.4 L765.0 828.8 L772.5 820.0 L782.5 805.0 L788.8 792.5 L795.0 778.8 L800.0 766.2 L805.6 752.9 L805.6 753.5 L758.0 753.5Z" fill="url(#ho)" stroke="none" shape-rendering="crispEdges"/>
<path d="M805.6 752.9 L812.5 734.8 L818.8 716.0 L825.0 697.2 L831.2 677.2 L837.5 657.2 L844.4 636.0 L850.0 621.2 L856.2 602.5 L863.8 582.5 L870.0 568.8 L877.5 553.8 L885.0 541.9 L891.2 533.8 L895.6 530.6 L896.0 530.3 L896.0 753.5 L805.6 753.5Z" fill="url(#ho)" stroke="none" shape-rendering="crispEdges"/>
<path d="M937.0 530.1 L943.8 538.1 L950.6 547.5 L956.2 561.2 L961.9 575.0 L966.2 590.0 L971.2 608.8 L975.0 625.0 L977.5 636.0 L981.2 654.8 L985.0 673.5 L989.4 694.8 L993.8 716.0 L998.8 736.0 L1003.3 753.0 L1003.3 753.5 L937.0 753.5Z" fill="url(#ho)" stroke="none" shape-rendering="crispEdges"/>
<path d="M1017.0 800.8 L1017.5 802.6 L1023.8 817.5 L1031.2 833.8 L1038.8 847.5 L1046.2 860.0 L1053.8 870.0 L1060.0 876.9 L1065.0 881.2 L1065.0 803 L1017.0 803Z" fill="url(#ho)" stroke="none" shape-rendering="crispEdges"/>
<path d="M1106.0 882.0 L1106.2 881.9 L1116.2 875.0 L1126.2 866.2 L1136.2 857.5 L1147.5 847.5 L1160.0 837.5 L1176.2 826.2 L1191.2 818.1 L1205.0 811.2 L1220.0 805.0 L1226.0 803.0 L1226.5 802.8 L1226.5 803 L1106.0 803Z" fill="url(#ho)" stroke="none" shape-rendering="crispEdges"/>
<path d="M718.0 833.4 L718.1 833.5 L726.2 838.1 L732.5 841.2 L738.1 842.5 L745.0 841.0 L751.2 838.5 L758.0 834.5 L758.0 833 L718.0 833Z" fill="url(#hg)" stroke="none" shape-rendering="crispEdges"/>
<path d="M896.0 530.3 L901.2 526.9 L909.4 521.5 L920.6 521.5 L929.4 523.8 L936.9 530.0 L937.0 530.1 L937.0 531 L896.0 531Z" fill="url(#hg)" stroke="none" shape-rendering="crispEdges"/>
<path d="M1065.0 881.2 L1075.0 886.9 L1085.0 888.8 L1095.0 886.9 L1106.0 882.0 L1106.0 881 L1065.0 881Z" fill="url(#hg)" stroke="none" shape-rendering="crispEdges"/>
<path d="M1003.3 753.0 L1007.3 768.4 L1010.4 777.7 L1013.5 788.2 L1017.5 802.6 L1018.0 803.8 L1018.0 753.5 L1003.3 753.5Z" fill="url(#hb)" stroke="none" shape-rendering="crispEdges"/>
<path d="M1226.0 803.0 L1238.0 797.9 L1250.0 793.0 L1262.0 788.5 L1274.0 784.2 L1286.0 780.1 L1298.0 776.3 L1310.0 772.8 L1322.0 769.5 L1334.0 766.5 L1346.0 763.8 L1358.0 761.3 L1370.0 759.1 L1382.0 757.2 L1394.0 755.5 L1394.8 755.4 L1394.8 755 L1226.0 755Z" fill="url(#hr)" stroke="none" shape-rendering="crispEdges"/>
<path d="M557.5 743V753" stroke="#ff9428" shape-rendering="crispEdges" fill="none" stroke-width="1"/>
<path d="M600.5 743V753" stroke="#ff9428" shape-rendering="crispEdges" fill="none" stroke-width="1"/>
<path d="M717.5 753V834" stroke="#ff9428" shape-rendering="crispEdges" fill="none" stroke-width="1"/>
<path d="M758.5 753V834" stroke="#ff9428" shape-rendering="crispEdges" fill="none" stroke-width="1"/>
<path d="M895.5 530V753" stroke="#ff9428" shape-rendering="crispEdges" fill="none" stroke-width="1"/>
<path d="M937.5 530V753" stroke="#ff9428" shape-rendering="crispEdges" fill="none" stroke-width="1"/>
<path d="M1064.5 803V882" stroke="#ff9428" shape-rendering="crispEdges" fill="none" stroke-width="1"/>
<path d="M1106.5 803V882" stroke="#ff9428" shape-rendering="crispEdges" fill="none" stroke-width="1"/>
<path d="M1017 803.5H1065M1106 803.5H1226" stroke="#ff9428" shape-rendering="crispEdges" fill="none" stroke-width="1"/>
<path d="M718 833.5H728M734 833.5H753M896 530.5H908M914 530.5H937M1065 881.5H1077M1083 881.5H1102" stroke="#78ff00" shape-rendering="crispEdges" fill="none" stroke-width="1"/>
<path d="M1017.5 753V803" stroke="#00008b" shape-rendering="crispEdges" fill="none" stroke-width="1"/>
<path d="M1226.5 755V803M1226 755.5H1392" stroke="#ff0000" shape-rendering="crispEdges" fill="none" stroke-width="1"/>
<polyline points="441.7,753.3 462.0,750.2 488.0,749.2 515.0,748.4 539.8,746.5 557.0,743.2 563.2,742.2 590.3,742.2 600.2,743.2 615.0,746.5 620.0,749.4 627.5,753.5 636.2,758.1 645.0,765.0 656.2,774.4 665.0,782.5 674.4,791.9 685.0,802.5 695.0,813.1 705.0,823.8 712.5,830.0 718.1,833.5 726.2,838.1 732.5,841.2 738.1,842.5 745.0,841.0 751.2,838.5 758.1,834.4 765.0,828.8 772.5,820.0 782.5,805.0 788.8,792.5 795.0,778.8 800.0,766.2 805.6,752.9 812.5,734.8 818.8,716.0 825.0,697.2 831.2,677.2 837.5,657.2 844.4,636.0 850.0,621.2 856.2,602.5 863.8,582.5 870.0,568.8 877.5,553.8 885.0,541.9 891.2,533.8 895.6,530.6 901.2,526.9 909.4,521.5 920.6,521.5 929.4,523.8 936.9,530.0 943.8,538.1 950.6,547.5 956.2,561.2 961.9,575.0 966.2,590.0 971.2,608.8 975.0,625.0 977.5,636.0 981.2,654.8 985.0,673.5 989.4,694.8 993.8,716.0 998.8,736.0 1003.3,753.0 1007.3,768.4 1010.4,777.7 1013.5,788.2 1017.5,802.6 1023.8,817.5 1031.2,833.8 1038.8,847.5 1046.2,860.0 1053.8,870.0 1060.0,876.9 1065.0,881.2 1075.0,886.9 1085.0,888.8 1095.0,886.9 1106.2,881.9 1116.2,875.0 1126.2,866.2 1136.2,857.5 1147.5,847.5 1160.0,837.5 1176.2,826.2 1191.2,818.1 1205.0,811.2 1220.0,805.0 1226.0,803.0 1238.0,797.9 1250.0,793.0 1262.0,788.5 1274.0,784.2 1286.0,780.1 1298.0,776.3 1310.0,772.8 1322.0,769.5 1334.0,766.5 1346.0,763.8 1358.0,761.3 1370.0,759.1 1382.0,757.2 1394.0,755.5 1394.8,755.4" stroke="#800080" stroke-width="0.95" fill="none"/>
<rect x="8" y="753" width="1749" height="1" fill="#000" shape-rendering="crispEdges"/>
<path d="M516.3 750.5H607.6" stroke="#000" shape-rendering="crispEdges" fill="none" stroke-width="1"/>
<path d="M605.1 750.5L599.3000000000001 747.6V753.4Z" fill="#000"/>
<path d="M689.5 780.5H775.5" stroke="#000" shape-rendering="crispEdges" fill="none" stroke-width="1"/>
<path d="M692.0 780.5L697.8 777.6V783.4Z" fill="#000"/>
<path d="M864.4 678.5H960" stroke="#000" shape-rendering="crispEdges" fill="none" stroke-width="1"/>
<path d="M957.5 678.5L951.7 675.6V681.4Z" fill="#000"/>
<path d="M1047.1 829.5H1142.7" stroke="#000" shape-rendering="crispEdges" fill="none" stroke-width="1"/>
<path d="M1049.6 829.5L1055.3999999999999 826.6V832.4Z" fill="#000"/>
</g>
<text x="26.6" y="223.8" style="font-size:12px;letter-spacing:0.33px;fill:#000">1220</text>
<text x="26.6" y="265.6" style="font-size:12px;letter-spacing:0.33px;fill:#000">1210</text>
<text x="26.6" y="307.3" style="font-size:12px;letter-spacing:0.33px;fill:#000">1200</text>
<text x="26.6" y="349.1" style="font-size:12px;letter-spacing:0.33px;fill:#000">1190</text>
<text x="26.6" y="390.9" style="font-size:12px;letter-spacing:0.33px;fill:#000">1180</text>
<text x="26.6" y="432.6" style="font-size:12px;letter-spacing:0.33px;fill:#000">1170</text>
<text x="25" y="529.4" style="font-size:12px;letter-spacing:0.33px;fill:#000">20000</text>
<text x="25" y="586.4" style="font-size:12px;letter-spacing:0.33px;fill:#000">15000</text>
<text x="25" y="643.4" style="font-size:12px;letter-spacing:0.33px;fill:#000">10000</text>
<text x="26" y="700.4" style="font-size:12px;letter-spacing:0.33px;fill:#000">5000</text>
<text x="26" y="757.4" style="font-size:12px;letter-spacing:0.33px;fill:#000">0</text>
<text x="25" y="814.4" style="font-size:12px;letter-spacing:0.33px;fill:#000">-5000</text>
<text transform="translate(67.6,480.9) rotate(-90)" style="font-size:12px;letter-spacing:0.33px;fill:#000">-9-00</text>
<text transform="translate(109.3,480.9) rotate(-90)" style="font-size:12px;letter-spacing:0.33px;fill:#000">-8-00</text>
<text transform="translate(151.1,480.9) rotate(-90)" style="font-size:12px;letter-spacing:0.33px;fill:#000">-7-00</text>
<text transform="translate(192.8,480.9) rotate(-90)" style="font-size:12px;letter-spacing:0.33px;fill:#000">-6-00</text>
<text transform="translate(234.5,480.9) rotate(-90)" style="font-size:12px;letter-spacing:0.33px;fill:#000">-5-00</text>
<text transform="translate(276.3,480.9) rotate(-90)" style="font-size:12px;letter-spacing:0.33px;fill:#000">-4-00</text>
<text transform="translate(318.0,480.9) rotate(-90)" style="font-size:12px;letter-spacing:0.33px;fill:#000">-3-00</text>
<text transform="translate(359.7,480.9) rotate(-90)" style="font-size:12px;letter-spacing:0.33px;fill:#000">-2-00</text>
<text transform="translate(401.5,480.9) rotate(-90)" style="font-size:12px;letter-spacing:0.33px;fill:#000">-1-00</text>
<text transform="translate(443.2,480.9) rotate(-90)" style="font-size:12px;letter-spacing:0.33px;fill:#000">0+00</text>
<text transform="translate(484.9,480.9) rotate(-90)" style="font-size:12px;letter-spacing:0.33px;fill:#000">1+00</text>
<text transform="translate(526.6,480.9) rotate(-90)" style="font-size:12px;letter-spacing:0.33px;fill:#000">2+00</text>
<text transform="translate(568.4,480.9) rotate(-90)" style="font-size:12px;letter-spacing:0.33px;fill:#000">3+00</text>
<text transform="translate(610.1,480.9) rotate(-90)" style="font-size:12px;letter-spacing:0.33px;fill:#000">4+00</text>
<text transform="translate(651.8,480.9) rotate(-90)" style="font-size:12px;letter-spacing:0.33px;fill:#000">5+00</text>
<text transform="translate(693.6,480.9) rotate(-90)" style="font-size:12px;letter-spacing:0.33px;fill:#000">6+00</text>
<text transform="translate(735.3,480.9) rotate(-90)" style="font-size:12px;letter-spacing:0.33px;fill:#000">7+00</text>
<text transform="translate(777.0,480.9) rotate(-90)" style="font-size:12px;letter-spacing:0.33px;fill:#000">8+00</text>
<text transform="translate(818.8,480.9) rotate(-90)" style="font-size:12px;letter-spacing:0.33px;fill:#000">9+00</text>
<text transform="translate(860.5,480.9) rotate(-90)" style="font-size:12px;letter-spacing:0.33px;fill:#000">10+00</text>
<text transform="translate(902.2,480.9) rotate(-90)" style="font-size:12px;letter-spacing:0.33px;fill:#000">11+00</text>
<text transform="translate(943.9,480.9) rotate(-90)" style="font-size:12px;letter-spacing:0.33px;fill:#000">12+00</text>
<text transform="translate(985.7,480.9) rotate(-90)" style="font-size:12px;letter-spacing:0.33px;fill:#000">13+00</text>
<text transform="translate(1027.4,480.9) rotate(-90)" style="font-size:12px;letter-spacing:0.33px;fill:#000">14+00</text>
<text transform="translate(1069.1,480.9) rotate(-90)" style="font-size:12px;letter-spacing:0.33px;fill:#000">15+00</text>
<text transform="translate(1110.9,480.9) rotate(-90)" style="font-size:12px;letter-spacing:0.33px;fill:#000">16+00</text>
<text transform="translate(1152.6,480.9) rotate(-90)" style="font-size:12px;letter-spacing:0.33px;fill:#000">17+00</text>
<text transform="translate(1194.3,480.9) rotate(-90)" style="font-size:12px;letter-spacing:0.33px;fill:#000">18+00</text>
<text transform="translate(1236.1,480.9) rotate(-90)" style="font-size:12px;letter-spacing:0.33px;fill:#000">19+00</text>
<text transform="translate(1277.8,480.9) rotate(-90)" style="font-size:12px;letter-spacing:0.33px;fill:#000">20+00</text>
<text transform="translate(1319.5,480.9) rotate(-90)" style="font-size:12px;letter-spacing:0.33px;fill:#000">21+00</text>
<text transform="translate(1361.2,480.9) rotate(-90)" style="font-size:12px;letter-spacing:0.33px;fill:#000">22+00</text>
<text transform="translate(1403.0,480.9) rotate(-90)" style="font-size:12px;letter-spacing:0.33px;fill:#000">23+00</text>
<text transform="translate(1444.7,480.9) rotate(-90)" style="font-size:12px;letter-spacing:0.33px;fill:#000">24+00</text>
<text transform="translate(1486.4,480.9) rotate(-90)" style="font-size:12px;letter-spacing:0.33px;fill:#000">25+00</text>
<text transform="translate(1528.2,480.9) rotate(-90)" style="font-size:12px;letter-spacing:0.33px;fill:#000">26+00</text>
<text transform="translate(1569.9,480.9) rotate(-90)" style="font-size:12px;letter-spacing:0.33px;fill:#000">27+00</text>
<text transform="translate(1611.6,480.9) rotate(-90)" style="font-size:12px;letter-spacing:0.33px;fill:#000">28+00</text>
<text transform="translate(1653.4,480.9) rotate(-90)" style="font-size:12px;letter-spacing:0.33px;fill:#000">29+00</text>
<text transform="translate(1695.1,480.9) rotate(-90)" style="font-size:12px;letter-spacing:0.33px;fill:#000">30+00</text>
<text transform="translate(1736.8,480.9) rotate(-90)" style="font-size:12px;letter-spacing:0.33px;fill:#000">31+00</text>
<text transform="translate(67.6,895.4) rotate(-90)" style="font-size:12px;letter-spacing:0.33px;fill:#000">-9-00</text>
<text transform="translate(88.5,895.4) rotate(-90)" style="font-size:12px;letter-spacing:0.33px;fill:#000">-8-50</text>
<text transform="translate(109.3,895.4) rotate(-90)" style="font-size:12px;letter-spacing:0.33px;fill:#000">-8-00</text>
<text transform="translate(130.2,895.4) rotate(-90)" style="font-size:12px;letter-spacing:0.33px;fill:#000">-7-50</text>
<text transform="translate(151.1,895.4) rotate(-90)" style="font-size:12px;letter-spacing:0.33px;fill:#000">-7-00</text>
<text transform="translate(171.9,895.4) rotate(-90)" style="font-size:12px;letter-spacing:0.33px;fill:#000">-6-50</text>
<text transform="translate(192.8,895.4) rotate(-90)" style="font-size:12px;letter-spacing:0.33px;fill:#000">-6-00</text>
<text transform="translate(213.7,895.4) rotate(-90)" style="font-size:12px;letter-spacing:0.33px;fill:#000">-5-50</text>
<text transform="translate(234.5,895.4) rotate(-90)" style="font-size:12px;letter-spacing:0.33px;fill:#000">-5-00</text>
<text transform="translate(255.4,895.4) rotate(-90)" style="font-size:12px;letter-spacing:0.33px;fill:#000">-4-50</text>
<text transform="translate(276.3,895.4) rotate(-90)" style="font-size:12px;letter-spacing:0.33px;fill:#000">-4-00</text>
<text transform="translate(297.1,895.4) rotate(-90)" style="font-size:12px;letter-spacing:0.33px;fill:#000">-3-50</text>
<text transform="translate(318.0,895.4) rotate(-90)" style="font-size:12px;letter-spacing:0.33px;fill:#000">-3-00</text>
<text transform="translate(338.9,895.4) rotate(-90)" style="font-size:12px;letter-spacing:0.33px;fill:#000">-2-50</text>
<text transform="translate(359.7,895.4) rotate(-90)" style="font-size:12px;letter-spacing:0.33px;fill:#000">-2-00</text>
<text transform="translate(380.6,895.4) rotate(-90)" style="font-size:12px;letter-spacing:0.33px;fill:#000">-1-50</text>
<text transform="translate(401.5,895.4) rotate(-90)" style="font-size:12px;letter-spacing:0.33px;fill:#000">-1-00</text>
<text transform="translate(422.3,895.4) rotate(-90)" style="font-size:12px;letter-spacing:0.33px;fill:#000">0-50</text>
<text transform="translate(443.2,895.4) rotate(-90)" style="font-size:12px;letter-spacing:0.33px;fill:#000">0+00</text>
<text transform="translate(464.1,895.4) rotate(-90)" style="font-size:12px;letter-spacing:0.33px;fill:#000">0+50</text>
<text transform="translate(484.9,895.4) rotate(-90)" style="font-size:12px;letter-spacing:0.33px;fill:#000">1+00</text>
<text transform="translate(505.8,895.4) rotate(-90)" style="font-size:12px;letter-spacing:0.33px;fill:#000">1+50</text>
<text transform="translate(526.6,895.4) rotate(-90)" style="font-size:12px;letter-spacing:0.33px;fill:#000">2+00</text>
<text transform="translate(547.5,895.4) rotate(-90)" style="font-size:12px;letter-spacing:0.33px;fill:#000">2+50</text>
<text transform="translate(568.4,895.4) rotate(-90)" style="font-size:12px;letter-spacing:0.33px;fill:#000">3+00</text>
<text transform="translate(589.2,895.4) rotate(-90)" style="font-size:12px;letter-spacing:0.33px;fill:#000">3+50</text>
<text transform="translate(610.1,895.4) rotate(-90)" style="font-size:12px;letter-spacing:0.33px;fill:#000">4+00</text>
<text transform="translate(631.0,895.4) rotate(-90)" style="font-size:12px;letter-spacing:0.33px;fill:#000">4+50</text>
<text transform="translate(651.8,895.4) rotate(-90)" style="font-size:12px;letter-spacing:0.33px;fill:#000">5+00</text>
<text transform="translate(672.7,895.4) rotate(-90)" style="font-size:12px;letter-spacing:0.33px;fill:#000">5+50</text>
<text transform="translate(693.6,895.4) rotate(-90)" style="font-size:12px;letter-spacing:0.33px;fill:#000">6+00</text>
<text transform="translate(714.4,895.4) rotate(-90)" style="font-size:12px;letter-spacing:0.33px;fill:#000">6+50</text>
<text transform="translate(735.3,895.4) rotate(-90)" style="font-size:12px;letter-spacing:0.33px;fill:#000">7+00</text>
<text transform="translate(756.2,895.4) rotate(-90)" style="font-size:12px;letter-spacing:0.33px;fill:#000">7+50</text>
<text transform="translate(777.0,895.4) rotate(-90)" style="font-size:12px;letter-spacing:0.33px;fill:#000">8+00</text>
<text transform="translate(797.9,895.4) rotate(-90)" style="font-size:12px;letter-spacing:0.33px;fill:#000">8+50</text>
<text transform="translate(818.8,895.4) rotate(-90)" style="font-size:12px;letter-spacing:0.33px;fill:#000">9+00</text>
<text transform="translate(839.6,895.4) rotate(-90)" style="font-size:12px;letter-spacing:0.33px;fill:#000">9+50</text>
<text transform="translate(860.5,895.4) rotate(-90)" style="font-size:12px;letter-spacing:0.33px;fill:#000">10+00</text>
<text transform="translate(881.3,895.4) rotate(-90)" style="font-size:12px;letter-spacing:0.33px;fill:#000">10+50</text>
<text transform="translate(902.2,895.4) rotate(-90)" style="font-size:12px;letter-spacing:0.33px;fill:#000">11+00</text>
<text transform="translate(923.1,895.4) rotate(-90)" style="font-size:12px;letter-spacing:0.33px;fill:#000">11+50</text>
<text transform="translate(943.9,895.4) rotate(-90)" style="font-size:12px;letter-spacing:0.33px;fill:#000">12+00</text>
<text transform="translate(964.8,895.4) rotate(-90)" style="font-size:12px;letter-spacing:0.33px;fill:#000">12+50</text>
<text transform="translate(985.7,895.4) rotate(-90)" style="font-size:12px;letter-spacing:0.33px;fill:#000">13+00</text>
<text transform="translate(1006.5,895.4) rotate(-90)" style="font-size:12px;letter-spacing:0.33px;fill:#000">13+50</text>
<text transform="translate(1027.4,895.4) rotate(-90)" style="font-size:12px;letter-spacing:0.33px;fill:#000">14+00</text>
<text transform="translate(1048.3,895.4) rotate(-90)" style="font-size:12px;letter-spacing:0.33px;fill:#000">14+50</text>
<text transform="translate(1069.1,895.4) rotate(-90)" style="font-size:12px;letter-spacing:0.33px;fill:#000">15+00</text>
<text transform="translate(1090.0,895.4) rotate(-90)" style="font-size:12px;letter-spacing:0.33px;fill:#000">15+50</text>
<text transform="translate(1110.9,895.4) rotate(-90)" style="font-size:12px;letter-spacing:0.33px;fill:#000">16+00</text>
<text transform="translate(1131.7,895.4) rotate(-90)" style="font-size:12px;letter-spacing:0.33px;fill:#000">16+50</text>
<text transform="translate(1152.6,895.4) rotate(-90)" style="font-size:12px;letter-spacing:0.33px;fill:#000">17+00</text>
<text transform="translate(1173.5,895.4) rotate(-90)" style="font-size:12px;letter-spacing:0.33px;fill:#000">17+50</text>
<text transform="translate(1194.3,895.4) rotate(-90)" style="font-size:12px;letter-spacing:0.33px;fill:#000">18+00</text>
<text transform="translate(1215.2,895.4) rotate(-90)" style="font-size:12px;letter-spacing:0.33px;fill:#000">18+50</text>
<text transform="translate(1236.1,895.4) rotate(-90)" style="font-size:12px;letter-spacing:0.33px;fill:#000">19+00</text>
<text transform="translate(1256.9,895.4) rotate(-90)" style="font-size:12px;letter-spacing:0.33px;fill:#000">19+50</text>
<text transform="translate(1277.8,895.4) rotate(-90)" style="font-size:12px;letter-spacing:0.33px;fill:#000">20+00</text>
<text transform="translate(1298.7,895.4) rotate(-90)" style="font-size:12px;letter-spacing:0.33px;fill:#000">20+50</text>
<text transform="translate(1319.5,895.4) rotate(-90)" style="font-size:12px;letter-spacing:0.33px;fill:#000">21+00</text>
<text transform="translate(1340.4,895.4) rotate(-90)" style="font-size:12px;letter-spacing:0.33px;fill:#000">21+50</text>
<text transform="translate(1361.2,895.4) rotate(-90)" style="font-size:12px;letter-spacing:0.33px;fill:#000">22+00</text>
<text transform="translate(1382.1,895.4) rotate(-90)" style="font-size:12px;letter-spacing:0.33px;fill:#000">22+50</text>
<text transform="translate(1403.0,895.4) rotate(-90)" style="font-size:12px;letter-spacing:0.33px;fill:#000">23+00</text>
<text transform="translate(1423.8,895.4) rotate(-90)" style="font-size:12px;letter-spacing:0.33px;fill:#000">23+50</text>
<text transform="translate(1444.7,895.4) rotate(-90)" style="font-size:12px;letter-spacing:0.33px;fill:#000">24+00</text>
<text transform="translate(1465.6,895.4) rotate(-90)" style="font-size:12px;letter-spacing:0.33px;fill:#000">24+50</text>
<text transform="translate(1486.4,895.4) rotate(-90)" style="font-size:12px;letter-spacing:0.33px;fill:#000">25+00</text>
<text transform="translate(1507.3,895.4) rotate(-90)" style="font-size:12px;letter-spacing:0.33px;fill:#000">25+50</text>
<text transform="translate(1528.2,895.4) rotate(-90)" style="font-size:12px;letter-spacing:0.33px;fill:#000">26+00</text>
<text transform="translate(1549.0,895.4) rotate(-90)" style="font-size:12px;letter-spacing:0.33px;fill:#000">26+50</text>
<text transform="translate(1569.9,895.4) rotate(-90)" style="font-size:12px;letter-spacing:0.33px;fill:#000">27+00</text>
<text transform="translate(1590.8,895.4) rotate(-90)" style="font-size:12px;letter-spacing:0.33px;fill:#000">27+50</text>
<text transform="translate(1611.6,895.4) rotate(-90)" style="font-size:12px;letter-spacing:0.33px;fill:#000">28+00</text>
<text transform="translate(1632.5,895.4) rotate(-90)" style="font-size:12px;letter-spacing:0.33px;fill:#000">28+50</text>
<text transform="translate(1653.4,895.4) rotate(-90)" style="font-size:12px;letter-spacing:0.33px;fill:#000">29+00</text>
<text transform="translate(1674.2,895.4) rotate(-90)" style="font-size:12px;letter-spacing:0.33px;fill:#000">29+50</text>
<text transform="translate(1695.1,895.4) rotate(-90)" style="font-size:12px;letter-spacing:0.33px;fill:#000">30+00</text>
<text transform="translate(1715.9,895.4) rotate(-90)" style="font-size:12px;letter-spacing:0.33px;fill:#000">30+50</text>
<text transform="translate(1736.8,895.4) rotate(-90)" style="font-size:12px;letter-spacing:0.33px;fill:#000">31+00</text>
<text x="1643.5" y="515.6" style="font-size:12px;letter-spacing:0.07px;fill:#000">Mass Haul (Cu. Yd.)</text>
<text x="1727.5" y="485.6" style="font-size:12px;letter-spacing:-0.05px;fill:#000">L-Stn</text>
</svg>
<svg style="left:0;top:0" width="1784" height="970" viewBox="0 0 1784 970">
<defs>
<radialGradient id="orb" cx="0.5" cy="0.4" r="0.6"><stop offset="0" stop-color="#f2f2f2"/><stop offset="0.6" stop-color="#dedede"/><stop offset="0.9" stop-color="#b8b8b8"/><stop offset="1" stop-color="#9a9a9a"/></radialGradient>
<clipPath id="orbc"><circle cx="33.950" cy="33.800" r="21.500"/></clipPath>
<linearGradient id="lens" x1="0" y1="0" x2="0" y2="1"><stop offset="0" stop-color="#f8fbfe"/><stop offset="1" stop-color="#cfe0f2"/></linearGradient>
<linearGradient id="win" x1="0" y1="0" x2="0" y2="1"><stop offset="0" stop-color="#f2f6fc"/><stop offset="1" stop-color="#c6daf0"/></linearGradient>
<linearGradient id="grn" x1="0" y1="0" x2="1" y2="0"><stop offset="0" stop-color="#2c9a3c"/><stop offset="0.5" stop-color="#4cba55"/><stop offset="1" stop-color="#2c9a3c"/></linearGradient>
<linearGradient id="blu" x1="0" y1="0" x2="1" y2="0"><stop offset="0" stop-color="#1c4f86"/><stop offset="1" stop-color="#2f74b8"/></linearGradient>
<radialGradient id="red" cx="0.5" cy="0.4" r="0.6"><stop offset="0" stop-color="#ee5a3a"/><stop offset="1" stop-color="#c22a14"/></radialGradient>
<radialGradient id="gplus" cx="0.5" cy="0.4" r="0.6"><stop offset="0" stop-color="#3cb858"/><stop offset="1" stop-color="#148a36"/></radialGradient>
<linearGradient id="sel" x1="0" y1="0" x2="0" y2="1"><stop offset="0" stop-color="#fbdcae"/><stop offset="0.35" stop-color="#fdb552"/><stop offset="0.5" stop-color="#fdb14a"/><stop offset="0.8" stop-color="#fee28f"/><stop offset="1" stop-color="#fff0b0"/></linearGradient>
</defs>
<filter id="bl" x="-10%" y="-10%" width="120%" height="120%"><feGaussianBlur stdDeviation="0.45"/></filter>
<circle cx="34.400" cy="35" r="23.200" fill="#405878" opacity="0.35"/>
<circle cx="33.950" cy="33.800" r="22.400" fill="url(#orb)" stroke="#8c8c8c" stroke-width="0.9"/>
<g clip-path="url(#orbc)" filter="url(#bl)">
<path d="M13 27.5L26 33L40 34.5L54 35L54 40L52 44.5L45.5 51.5L34 55.5L26 54L19 48Z" fill="#f2f8ee"/>
<path d="M14.500 27L42.500 31.300L38 32.600L24 31Z" fill="#86cc44"/>
<path d="M13.500 27.600L33 32.600L26 33.600L16 30Z" fill="#167f3e"/>
<path d="M12.500 28C18 29 23.500 31 25.800 33.600C27 36.500 26.600 39.500 25.200 42C23.800 44.500 21.500 46.500 19.800 47.900C15.500 43 12.500 37 12.500 28Z" fill="#0a7a3c"/>
<path d="M28.400 35.700L38.600 34.900C40.200 36.400 40.800 38.400 40.400 40L28.400 40.800C29.200 39 29.200 37.300 28.400 35.700Z" fill="#1b9150"/>
<path d="M27.200 43.800L41 41.600C41 43.400 40.600 45 39.900 46.500L22.600 48.300C24.600 47 26.200 45.500 27.200 43.800Z" fill="#168a48"/>
<path d="M22.600 49.600L39 47.600C37.800 50 35.800 52.400 33.400 54.200L27.200 53.600C25.400 52.600 23.800 51.200 22.600 49.600Z" fill="#179048"/>
<path d="M40 34.600L52 33.800L54 38.400L41.600 39.600C41.600 37.800 41 36 40 34.600Z" fill="#94d444"/>
<path d="M42.400 41.400L53.400 39.600L51.600 44L41.400 46.600C42 45 42.400 43.200 42.400 41.400Z" fill="#9cd84a"/>
<path d="M40.600 47.600L50 45.400L45 51L34.600 54.600C37 52.800 39.200 50.400 40.600 47.600Z" fill="#8ed040"/>
</g>
<ellipse cx="33.500" cy="19.500" rx="14" ry="6" fill="#fff" opacity="0.5"/>
<path d="M18 50A22.100 22.100 0 0 0 50.500 49.500A25 25 0 0 1 18 50Z" fill="#fff" opacity="0.55"/>
<path d="M55 8.5H217A13.5 13.5 0 0 1 217 35.500H72C64 35.5 62 30 60 22C58.5 14 57 10 52 8.5Z" fill="#4a98d9" stroke="#2a72bc" stroke-width="1.3"/>
<path d="M71 13H80L85 18V30H71Z" fill="#eef3fa" stroke="#3a3a3a" stroke-width="1.6" stroke-linejoin="round"/><path d="M80 13V18H85Z" fill="#3a6ea5"/><path d="M73.500 20H80M73.500 22.500H80M73.500 25H79" stroke="#999" stroke-width="1"/>
<circle cx="84" cy="26.5" r="4.6" fill="url(#gplus)" stroke="#0f7a2c" stroke-width="0.5"/><path d="M81.200 26.500H86.800M84 23.700V29.300" stroke="#fff" stroke-width="1.7"/>
<path d="M96.500 27.500V15.200H102.500L104 17H112.500V20.500" fill="#2a62ac" stroke="#3a3a3a" stroke-width="1.700" stroke-linejoin="round"/><path d="M96.800 28L99.600 19.800H114.200L111.500 28Z" fill="#dce9f7" stroke="#3a3a3a" stroke-width="1.700" stroke-linejoin="round"/>
<rect x="123.200" y="15.200" width="12.600" height="13.400" rx="1" fill="#3a3a3a"/><rect x="125.300" y="21.500" width="8.400" height="6.600" fill="#e4eefa"/><rect x="126.600" y="15.200" width="5.600" height="3.800" fill="#cfd8e4"/><rect x="128.800" y="15.600" width="1.300" height="3" fill="#3a3a3a"/>
<path d="M153.79999999999998 19.500V12.800H158.79999999999998L161.2 15.200V19.500Z" fill="#c5cad3" stroke="#8d939d" stroke-width="0.800"/><path d="M158.79999999999998 12.800V15.200H161.2Z" fill="#3a6ea5"/>
<rect x="148.2" y="19.600" width="17.400" height="8.200" rx="1.600" fill="#e9eff7" stroke="#3a3a3a" stroke-width="1.800"/>
<rect x="151.39999999999998" y="18.900" width="11" height="2.700" fill="#b9c0cb"/><rect x="151.39999999999998" y="21.400" width="11" height="0.900" fill="#555"/>
<path d="M179.2 19.500V12.800H184.2L186.6 15.200V19.500Z" fill="#c5cad3" stroke="#8d939d" stroke-width="0.800"/><path d="M184.2 12.800V15.200H186.6Z" fill="#3a6ea5"/>
<rect x="173.6" y="19.600" width="17.400" height="8.200" rx="1.600" fill="#e9eff7" stroke="#3a3a3a" stroke-width="1.800"/>
<rect x="176.79999999999998" y="18.900" width="11" height="2.700" fill="#b9c0cb"/><rect x="176.79999999999998" y="21.400" width="11" height="0.900" fill="#555"/>
<circle cx="187.800" cy="26.800" r="4.400" fill="#4a98d9"/><circle cx="187.800" cy="26.800" r="3.400" fill="#eef1f5" stroke="#77828f" stroke-width="1.700" stroke-dasharray="1.500 0.850"/><circle cx="187.800" cy="26.800" r="1.300" fill="#8794a4"/>
<path d="M201 21L208.500 15.500V19C214 19 217.500 22 218 28C215.500 24.500 212.500 23.300 208.500 23.400V26.700Z" fill="#3b6fa6"/>
<path d="M241.200 18H248M241.200 20.700H248" stroke="#8a8580" stroke-width="1.500"/><path d="M241.200 22.400H248L244.600 26.200Z" fill="#8a8580"/>
<g opacity="1.0"><path d="M28.8 86.6L34.8 93.0" stroke="#3e3e3e" stroke-width="3.4" stroke-linecap="round"/><path d="M30.6 88.5L34.5 92.7" stroke="#9a9a9a" stroke-width="1.2" stroke-linecap="round"/><circle cx="24.3" cy="82.1" r="6.3" fill="url(#lens)" stroke="#4a4a4a" stroke-width="1.8"/><path d="M20.600 82.100H28M24.300 78.400V85.800" stroke="#2ea43e" stroke-width="2.800"/></g>
<g opacity="1.0"><path d="M28.8 112.6L34.8 119.0" stroke="#3e3e3e" stroke-width="3.4" stroke-linecap="round"/><path d="M30.6 114.5L34.5 118.7" stroke="#9a9a9a" stroke-width="1.2" stroke-linecap="round"/><circle cx="24.3" cy="108.1" r="6.3" fill="url(#lens)" stroke="#4a4a4a" stroke-width="1.8"/><path d="M20.300 108.100H28.300" stroke="#2ea43e" stroke-width="2.600"/></g>
<g opacity="1.0"><path d="M28.8 138.6L34.8 145.0" stroke="#3e3e3e" stroke-width="3.4" stroke-linecap="round"/><path d="M30.6 140.5L34.5 144.7" stroke="#9a9a9a" stroke-width="1.2" stroke-linecap="round"/><circle cx="24.3" cy="134.1" r="6.3" fill="url(#lens)" stroke="#4a4a4a" stroke-width="1.8"/><path d="M26.500 129.500L28 131.500" stroke="#6fa0d0" stroke-width="0.800"/></g>
<g opacity="1.0"><path d="M149.9 86.6L155.9 93.0" stroke="#3e3e3e" stroke-width="3.4" stroke-linecap="round"/><path d="M151.7 88.5L155.6 92.7" stroke="#9a9a9a" stroke-width="1.2" stroke-linecap="round"/><circle cx="145.4" cy="82.1" r="6.3" fill="url(#lens)" stroke="#4a4a4a" stroke-width="1.8"/><path d="M141.8 82.1H149.0M145.4 78.5V85.69999999999999" stroke="#3a74b0" stroke-width="0.9"/><path d="M141.20000000000002 82.1L143.4 80.5V83.69999999999999ZM149.6 82.1L147.4 80.5V83.69999999999999ZM145.4 77.9L143.8 80.1H147.0ZM145.4 86.29999999999998L143.8 84.1H147.0Z" fill="#3a74b0"/></g>
<g opacity="0.55"><path d="M149.9 112.6L155.9 119.0" stroke="#3e3e3e" stroke-width="3.4" stroke-linecap="round"/><path d="M151.7 114.5L155.6 118.7" stroke="#9a9a9a" stroke-width="1.2" stroke-linecap="round"/><circle cx="145.4" cy="108.1" r="6.3" fill="url(#lens)" stroke="#4a4a4a" stroke-width="1.8"/><path d="M141.400 111.600L149.200 104.400" stroke="#e8786a" stroke-width="1.600"/></g>
<g transform="translate(137.6,127.6)" opacity="1"><path d="M5.8 11.5V4.2C5.8 2.600 8.200 2.600 8.200 4.200V2.600C8.200 1 10.600 1 10.600 2.600V3.200C10.600 1.800 13 1.800 13 3.400V5C13 3.800 15.300 3.800 15.300 5.400V13.500C15.300 16.500 14 18.500 12.500 18.500H7.500C6 18.500 5.200 17.500 3.800 15.500L0.900 11.300C0 10 1.600 8.800 2.800 9.800Z" fill="#d6e6f6" stroke="#444" stroke-width="1.5" stroke-linejoin="round"/><path d="M8.200 4.200V9.500M10.600 3V9.500M13 5V9.500" stroke="#444" stroke-width="1.2000000000000002"/></g>
<path d="M263.6 109.9V106.9C263.6 100.9 274.4 100.9 274.4 106.9V109.9" fill="none" stroke="#555" stroke-width="1.7"/>
<rect x="261.3" y="109.9" width="15.4" height="10.8" rx="1.800" fill="url(#win)" stroke="#555" stroke-width="1.7"/>
<path d="M269.0 117.06400000000001L267.3 113.86400000000002A1.900 1.900 0 1 1 270.7 113.86400000000002Z" fill="#2e2e2e"/>
<rect x="463.2" y="76.2" width="12.8" height="9.6" rx="1.2" fill="url(#win)" stroke="#444" stroke-width="1.5"/>
<rect x="463.95" y="76.95" width="11.3" height="2.0" fill="#2f68a8"/>
<rect x="460" y="79.8" width="12.8" height="9.6" rx="1.2" fill="url(#win)" stroke="#444" stroke-width="1.5"/>
<rect x="460.75" y="80.55" width="11.3" height="2.0" fill="#2f68a8"/>
<rect x="456.8" y="84" width="12.8" height="9.8" rx="1.2" fill="url(#win)" stroke="#444" stroke-width="1.5"/>
<rect x="457.55" y="84.75" width="11.3" height="2.0" fill="#2f68a8"/>
<rect x="456.8" y="102.4" width="7.8" height="16.6" rx="1.2" fill="url(#win)" stroke="#444" stroke-width="1.5"/>
<rect x="457.55" y="103.15" width="6.3" height="2.0" fill="#2f68a8"/>
<rect x="466.4" y="102.4" width="7.8" height="16.6" rx="1.2" fill="url(#win)" stroke="#444" stroke-width="1.5"/>
<rect x="467.15" y="103.15" width="6.3" height="2.0" fill="#2f68a8"/>
<rect x="456.8" y="128.8" width="17.4" height="7.4" rx="1.2" fill="url(#win)" stroke="#444" stroke-width="1.5"/>
<rect x="457.55" y="129.55" width="15.899999999999999" height="2.0" fill="#2f68a8"/>
<rect x="456.8" y="137.6" width="17.4" height="7.4" rx="1.2" fill="url(#win)" stroke="#444" stroke-width="1.5"/>
<rect x="457.55" y="138.35" width="15.899999999999999" height="2.0" fill="#2f68a8"/>
<rect x="603.400" y="79" width="33.800" height="27" rx="3" fill="url(#win)" stroke="#3c3c3c" stroke-width="2.600"/><rect x="604.700" y="80.300" width="31.200" height="2.400" fill="#2b66a8"/>
<path d="M614.400 86.600H626.800V100.300H633.700L620.500 112.600L607.400 100.300H614.400Z" fill="url(#grn)" stroke="#23883a" stroke-width="0.800"/>
<rect x="672.900" y="79" width="33.400" height="27.300" rx="3" fill="url(#win)" stroke="#3c3c3c" stroke-width="2.600"/><rect x="674.200" y="80.300" width="30.800" height="2.400" fill="#2b66a8"/>
<circle cx="699.600" cy="105.300" r="8.700" fill="url(#gplus)" stroke="#e8f4ea" stroke-width="0.600"/><path d="M694.300 105.300H704.900M699.600 100V110.600" stroke="#fff" stroke-width="3"/>
<rect x="752.600" y="79.200" width="12.400" height="31.600" rx="2" fill="url(#win)" stroke="#3c3c3c" stroke-width="2.600"/>
<path d="M731.800 90.700H745.300V86.300L754.800 95.200L745.300 104.200V100H731.800Z" fill="url(#blu)"/>
<rect x="791.100" y="77.200" width="17" height="12.600" rx="2.500" fill="url(#win)" stroke="#555" stroke-width="2"/><path d="M795.200 93H804.800M797.500 93L800 90.600L802.500 93" stroke="#4a4a4a" stroke-width="1.800" fill="none"/>
<rect x="997.300" y="75.400" width="17.900" height="18.900" rx="1.200" fill="#3a3a3a"/><rect x="999.900" y="84" width="12.500" height="9" fill="url(#win)"/><rect x="1001.800" y="75.400" width="8.400" height="5" fill="#d0d8e4"/><rect x="1005" y="76" width="1.600" height="4" fill="#3a3a3a"/><rect x="1007.800" y="76" width="1.400" height="4" fill="#777"/>
<path d="M1004 102.600H1009.800V111.200H1013.100L1006.500 117.400L999.700 111.200H1004Z" fill="url(#grn)" stroke="#23883a" stroke-width="0.600"/><rect x="997" y="118.200" width="18.700" height="2.300" fill="#555"/>
<circle cx="1006.500" cy="137.200" r="8.500" fill="url(#red)" stroke="#8e2614" stroke-width="0.900"/><path d="M1002.600 133.300L1010.400 141.100M1010.400 133.300L1002.600 141.100" stroke="#fff" stroke-width="3.100"/>
<rect x="1089.500" y="77.500" width="15" height="15" fill="#eceef3" stroke="#8e9096" stroke-width="1"/><rect x="1091.500" y="79.500" width="11" height="11" fill="#e1e5ee"/><path d="M1092.800 84.600L1096 89.600L1101.600 79.800" stroke="#3a5c9c" stroke-width="2" fill="none"/>
<rect x="1240.200" y="90.200" width="35.400" height="13.400" rx="6.700" fill="url(#win)" stroke="#2b2b2b" stroke-width="2.900"/><circle cx="1267.500" cy="97" r="4.400" fill="#34a848"/>
<rect x="50" y="936" width="31.500" height="23.500" fill="url(#sel)"/><rect x="50" y="959.500" width="31.500" height="1" fill="#f6f0e0"/>
<path d="M9.6 956.2 L10.4 954.1 L11.3 952.2 L12.3 950.6 L13.5 949.1 L14.8 947.9 L16.3 946.9 L17.9 946.2 L19.7 945.7 L21.6 945.2 L23.3 944.8 L24.8 944.2 L26.2 943.6 L27.4 942.8 L28.4 941.8 L29.5 940.5 L30.5 938.7" stroke="#444" stroke-width="1.25" fill="none" stroke-linejoin="round"/>
<path d="M11.6 957.0 L12.4 955.0 L13.2 953.3 L14.1 951.8 L15.1 950.6 L16.1 949.6 L17.3 948.8 L18.7 948.2 L20.2 947.8 L22.1 947.4 L23.9 946.9 L25.6 946.3 L27.2 945.5 L28.7 944.6 L30.1 943.3 L31.3 941.8 L32.4 939.8" stroke="#444" stroke-width="1.25" fill="none" stroke-linejoin="round"/>
<path d="M13.6 957.8 L14.4 955.9 L15.2 954.3 L15.9 953.0 L16.7 952.1 L17.5 951.3 L18.4 950.8 L19.4 950.3 L20.7 949.9 L22.7 949.5 L24.6 949.0 L26.5 948.3 L28.3 947.5 L30.1 946.3 L31.7 944.8 L33.1 943.0 L34.3 940.9" stroke="#444" stroke-width="1.25" fill="none" stroke-linejoin="round"/>
<path d="M39.2 945.6H46.2L42.7 950.2Z" fill="#8a8d94"/>
<path d="M55.800 948.500L59 950.500L65 949.800C68 949.500 68.500 943.200 72 942.600C75 942.200 76.300 946 76.800 949.300M55.600 951.700L60 951C62 952.800 64 953.500 66 952.500C68 951 69 946 71.500 945.200" stroke="#2e2e2e" stroke-width="1.450" fill="none" stroke-linejoin="round"/>
<path d="M88 955.800L93.600 948.300H103.700L108.700 955.800" stroke="#444" stroke-width="1.800" fill="none"/><path d="M98.400 938.700V958.300" stroke="#444" stroke-width="1.300" stroke-dasharray="2.200 1.600"/>
<rect x="120.500" y="938.200" width="19.600" height="19.600" fill="#444"/>
<rect x="122.6" y="940.20" width="4.000" height="1.900" fill="#c2c6cd"/>
<rect x="128.3" y="940.20" width="4.000" height="1.900" fill="#c2c6cd"/>
<rect x="134.0" y="940.20" width="4.000" height="1.900" fill="#c2c6cd"/>
<rect x="122.6" y="943.75" width="4.000" height="1.900" fill="#c2c6cd"/>
<rect x="128.3" y="943.75" width="4.000" height="1.900" fill="#c2c6cd"/>
<rect x="134.0" y="943.75" width="4.000" height="1.900" fill="#c2c6cd"/>
<rect x="122.6" y="947.30" width="4.000" height="1.900" fill="#c2c6cd"/>
<rect x="128.3" y="947.30" width="4.000" height="1.900" fill="#c2c6cd"/>
<rect x="134.0" y="947.30" width="4.000" height="1.900" fill="#c2c6cd"/>
<rect x="122.6" y="950.85" width="4.000" height="1.900" fill="#c2c6cd"/>
<rect x="128.3" y="950.85" width="4.000" height="1.900" fill="#c2c6cd"/>
<rect x="134.0" y="950.85" width="4.000" height="1.900" fill="#c2c6cd"/>
<rect x="122.6" y="954.40" width="4.000" height="1.900" fill="#c2c6cd"/>
<rect x="128.3" y="954.40" width="4.000" height="1.900" fill="#c2c6cd"/>
<rect x="134.0" y="954.40" width="4.000" height="1.900" fill="#c2c6cd"/>
<path d="M148.3 945.6H155.3L151.8 950.2Z" fill="#8a8d94"/>
<rect x="166" y="939.200" width="8.400" height="8" fill="none" stroke="#444" stroke-width="1.500"/><rect x="166" y="949.600" width="8.400" height="8" fill="none" stroke="#444" stroke-width="1.500"/>
<path d="M178.800 940H185.600M178.800 943.400H185.600M178.800 946.800H185.600" stroke="#444" stroke-width="1.200"/><path d="M176.300 940H177.800M176.300 943.400H177.800M176.300 946.800H177.800" stroke="#444" stroke-width="1.600"/><rect x="176.400" y="949.800" width="9.200" height="4.600" fill="#444"/><path d="M177.500 952L180 951L182 952.800L184.500 951.500" stroke="#c8ccd2" stroke-width="0.800" fill="none"/>
<path d="M196.600 958.500V953C196.600 948.500 199.500 947.600 204.800 947.600M205 943.800V953.200M209.400 943.800V953.200M205 948.500H209.400M209.400 947.300C214 946.500 217 944.500 217 937.900" stroke="#444" stroke-width="2" fill="none"/>
<path d="M229.400 952L235.300 944.400L238.900 953.200L242.400 943.800L248.900 952" stroke="#444" stroke-width="2" fill="none" stroke-linejoin="round"/>
<path d="M261.200 940.800H280.600M261.200 955H280.600" stroke="#444" stroke-width="2.200"/><path d="M262.800 944.600H274.500L279.600 948L274.500 951.400H262.800Z" stroke="#444" stroke-width="1.400" fill="none"/>
<rect x="294.200" y="943.800" width="13.600" height="13.400" fill="none" stroke="#444" stroke-width="1.800"/><path d="M294.200 943.800L299.300 938.900H312.400V952.300L307.800 957.200M307.800 943.800L312.400 938.900" fill="none" stroke="#444" stroke-width="1.600"/><path d="M299.300 938.900V952.300H312.400M299.300 952.300L294.200 957.200" fill="none" stroke="#444" stroke-width="1.500"/>
<path d="M321.2 946H327.8L324.5 950.6Z" fill="#8a8d94"/>
<path d="M337.700 955L343 947L346.600 950.800" stroke="#444" stroke-width="1.800" fill="none"/><path d="M353 945.500L358.300 954.400" stroke="#444" stroke-width="1.800"/><path d="M347.700 938V958.500M359.800 942V956" stroke="#444" stroke-width="1.100" stroke-dasharray="2 1.600"/>
<path d="M345.800 952.600L347 948.600L354.600 940.300L357.600 943L350 951.200Z" fill="#b8bcc3" stroke="#444" stroke-width="1.300" stroke-linejoin="round"/><path d="M352.800 942.300L355.700 945" stroke="#444" stroke-width="1"/>
<path d="M375 942.500V937.400H385.400L389.500 956.100H380.500" stroke="#444" stroke-width="2.400" fill="#b6bac1"/>
<circle cx="374" cy="952" r="4.400" fill="#b0b4bb" stroke="#444" stroke-width="2.600" stroke-dasharray="2.100 1.350"/><circle cx="374" cy="952" r="3.300" fill="#b0b4bb" stroke="#444" stroke-width="1.300"/><circle cx="374" cy="952" r="1.200" fill="none" stroke="#444" stroke-width="0.900"/>
<circle cx="371.600" cy="942.400" r="2.100" fill="none" stroke="#444" stroke-width="1.200" stroke-dasharray="1.200 0.800"/>
<path d="M737.600 950.300L745.900 943.300V946.900H755.600L753.800 950.400L755.600 953.900H745.900V957.300Z" fill="none" stroke="#444" stroke-width="1.300" stroke-linejoin="miter"/><rect x="734.400" y="948.600" width="3" height="3.400" fill="#c4c8ce" stroke="#444" stroke-width="0.900"/>
<path d="M783.800 950.300L775.500 943.300V946.900H765.400L767.200 950.400L765.400 953.900H775.500V957.300Z" fill="none" stroke="#444" stroke-width="1.300"/><rect x="784" y="948.600" width="3" height="3.400" fill="#c4c8ce" stroke="#444" stroke-width="0.900"/>
<rect x="801.600" y="939.600" width="2.300" height="21" fill="#c4c8ce" stroke="#444" stroke-width="1"/><path d="M803.900 940L817.200 946.600L803.900 952.200" fill="none" stroke="#444" stroke-width="1.300"/>
<rect x="841.6" y="940" width="13.8" height="11" rx="1.500" fill="#b4b8bf" stroke="#444" stroke-width="1.500"/>
<rect x="841.6" y="939.8" width="13.8" height="2" rx="0.800" fill="#444"/>
<rect x="838.2" y="944.4" width="13.8" height="11" rx="1.500" fill="#b4b8bf" stroke="#444" stroke-width="1.500"/>
<rect x="838.2" y="944.1999999999999" width="13.8" height="2" rx="0.800" fill="#444"/>
<rect x="834.8" y="948.8" width="13.8" height="11.2" rx="1.500" fill="#b4b8bf" stroke="#444" stroke-width="1.500"/>
<rect x="834.8" y="948.5999999999999" width="13.8" height="2" rx="0.800" fill="#444"/>
<rect x="867.3" y="940.2" width="9.2" height="19" rx="1.500" fill="#b4b8bf" stroke="#444" stroke-width="1.500"/>
<rect x="878.4" y="940.2" width="9.2" height="19" rx="1.500" fill="#b4b8bf" stroke="#444" stroke-width="1.500"/>
<rect x="867.300" y="939.800" width="9.200" height="1.600" fill="#444"/><rect x="878.400" y="939.800" width="9.200" height="1.600" fill="#444"/>
<rect x="899.2" y="941" width="19.6" height="7.6" rx="1.500" fill="#b4b8bf" stroke="#444" stroke-width="1.500"/>
<rect x="899.2" y="951.4" width="19.6" height="7.8" rx="1.500" fill="#b4b8bf" stroke="#444" stroke-width="1.500"/>
<rect x="899.200" y="940.400" width="19.600" height="1.800" fill="#444"/><rect x="899.200" y="950.800" width="19.600" height="1.400" fill="#444"/>
<g opacity="1.0"><path d="M949.5 952.3L955.2 958.5" stroke="#444" stroke-width="3.6" stroke-linecap="round"/><path d="M950.3 953.1L955.2 958.5" stroke="#b4b8bf" stroke-width="1.300" stroke-linecap="round"/><circle cx="943.9" cy="946.7" r="7.0" fill="none" stroke="#444" stroke-width="1.5"/></g>
<g opacity="1.0"><path d="M981.0 952.3L986.7 958.5" stroke="#444" stroke-width="3.6" stroke-linecap="round"/><path d="M981.8 953.1L986.7 958.5" stroke="#b4b8bf" stroke-width="1.300" stroke-linecap="round"/><circle cx="975.4" cy="946.7" r="7.0" fill="none" stroke="#444" stroke-width="1.5"/><path d="M971.1999999999999 946.7H979.6M975.4 942.5V950.9000000000001" stroke="#444" stroke-width="0.9"/><path d="M970.5999999999999 946.7L972.8 945.1V948.3000000000001ZM980.2 946.7L978.0 945.1V948.3000000000001ZM975.4 941.9L973.8 944.1H977.0ZM975.4 951.5000000000001L973.8 949.3000000000001H977.0Z" fill="#444"/></g>
<path d="M1004.9 948.1999999999999V945.0C1004.9 939.0 1015.7 939.0 1015.7 945.0V948.1999999999999" fill="none" stroke="#444" stroke-width="1.5"/>
<rect x="1002.6" y="948.1999999999999" width="15.4" height="11" rx="1.800" fill="none" stroke="#444" stroke-width="1.5"/>
<path d="M1010.3000000000001 955.43L1008.6 952.2299999999999A1.900 1.900 0 1 1 1012.0000000000001 952.2299999999999Z" fill="#2e2e2e"/>
<g transform="translate(1032,939.4)" opacity="1"><path d="M5.8 11.5V4.2C5.8 2.600 8.200 2.600 8.200 4.200V2.600C8.200 1 10.600 1 10.600 2.600V3.200C10.600 1.800 13 1.800 13 3.400V5C13 3.800 15.300 3.800 15.300 5.400V13.500C15.300 16.500 14 18.500 12.500 18.500H7.500C6 18.500 5.200 17.500 3.800 15.500L0.900 11.300C0 10 1.600 8.800 2.800 9.800Z" fill="none" stroke="#444" stroke-width="1.4" stroke-linejoin="round"/><path d="M8.200 4.200V9.500M10.600 3V9.500M13 5V9.500" stroke="#444" stroke-width="1.1199999999999999"/></g>
<g opacity="1.0"><path d="M1081.2 952.3L1086.9 958.5" stroke="#444" stroke-width="3.6" stroke-linecap="round"/><path d="M1082.0 953.1L1086.9 958.5" stroke="#b4b8bf" stroke-width="1.300" stroke-linecap="round"/><circle cx="1075.6" cy="946.7" r="7.0" fill="none" stroke="#444" stroke-width="1.5"/><path d="M1071.400 946.700H1079.800M1075.600 942.500V950.900" stroke="#444" stroke-width="1.800"/></g>
<g opacity="1.0"><path d="M1113.5 952.3L1119.2 958.5" stroke="#444" stroke-width="3.6" stroke-linecap="round"/><path d="M1114.3 953.1L1119.2 958.5" stroke="#b4b8bf" stroke-width="1.300" stroke-linecap="round"/><circle cx="1107.9" cy="946.7" r="7.0" fill="none" stroke="#444" stroke-width="1.5"/><path d="M1103.600 946.700H1112.200" stroke="#444" stroke-width="1.900"/></g>
<g opacity="1.0"><path d="M1145.7 952.3L1151.4 958.5" stroke="#8d9097" stroke-width="3.6" stroke-linecap="round"/><path d="M1146.5 953.1L1151.4 958.5" stroke="#b4b8bf" stroke-width="1.300" stroke-linecap="round"/><circle cx="1140.1" cy="946.7" r="7.0" fill="none" stroke="#8d9097" stroke-width="1.3"/><path d="M1135.600 951.200L1144.600 942.200" stroke="#8d9097" stroke-width="1.300"/></g>
<rect x="1777" y="954" width="2" height="2" fill="#e8eaee" shape-rendering="crispEdges"/><rect x="1776" y="953" width="2" height="2" fill="#5c606b" shape-rendering="crispEdges"/>
<rect x="1773" y="958" width="2" height="2" fill="#e8eaee" shape-rendering="crispEdges"/><rect x="1772" y="957" width="2" height="2" fill="#5c606b" shape-rendering="crispEdges"/>
<rect x="1777" y="958" width="2" height="2" fill="#e8eaee" shape-rendering="crispEdges"/><rect x="1776" y="957" width="2" height="2" fill="#5c606b" shape-rendering="crispEdges"/>
<rect x="1769" y="962" width="2" height="2" fill="#e8eaee" shape-rendering="crispEdges"/><rect x="1768" y="961" width="2" height="2" fill="#5c606b" shape-rendering="crispEdges"/>
<rect x="1773" y="962" width="2" height="2" fill="#e8eaee" shape-rendering="crispEdges"/><rect x="1772" y="961" width="2" height="2" fill="#5c606b" shape-rendering="crispEdges"/>
<rect x="1777" y="962" width="2" height="2" fill="#e8eaee" shape-rendering="crispEdges"/><rect x="1776" y="961" width="2" height="2" fill="#5c606b" shape-rendering="crispEdges"/>
</svg>
</body></html>
